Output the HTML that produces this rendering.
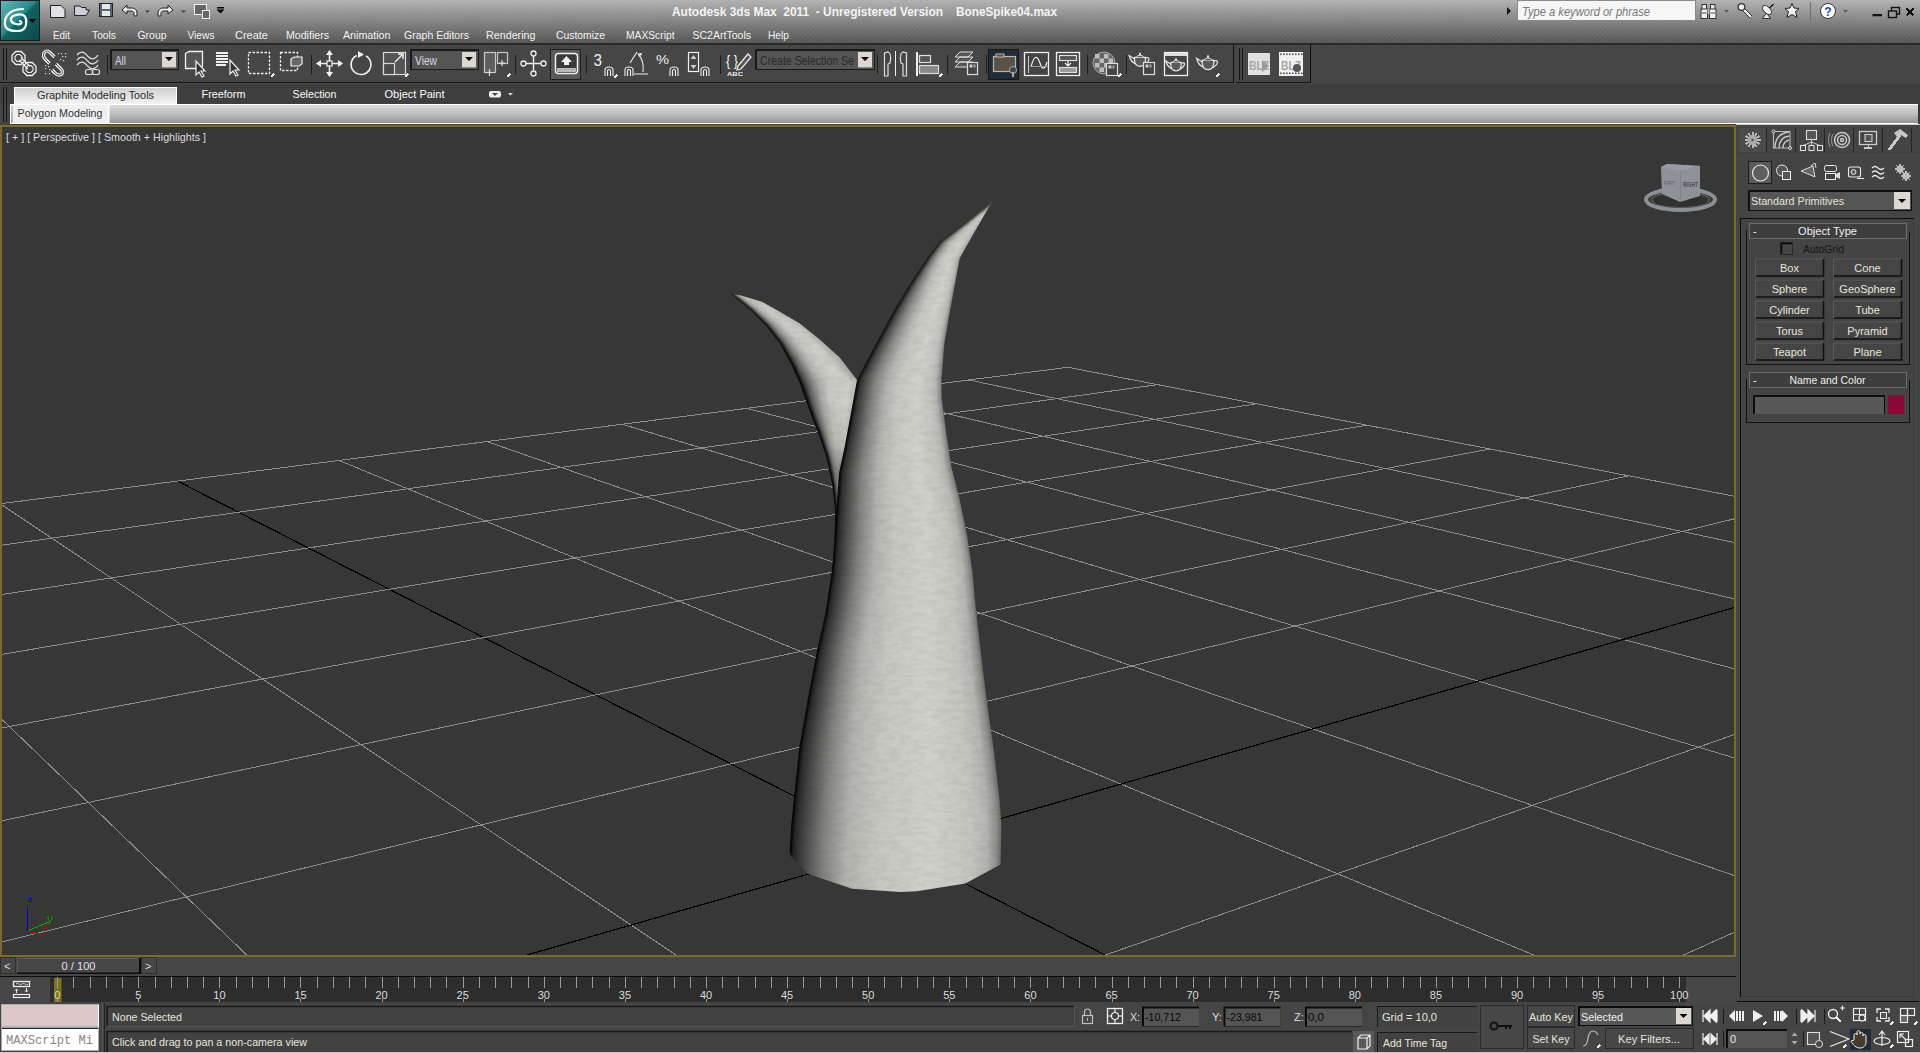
<!DOCTYPE html>
<html><head><meta charset="utf-8">
<style>
*{margin:0;padding:0;box-sizing:border-box}
html,body{width:1920px;height:1053px;overflow:hidden;background:#444;font-family:"Liberation Sans",sans-serif;font-size:11px;color:#ddd}
.a{position:absolute}
#title{left:0;top:0;width:1920px;height:43px;background:repeating-linear-gradient(135deg,rgba(255,255,255,0) 0px,rgba(255,255,255,0) 2px,rgba(255,255,255,0.05) 2.5px,rgba(255,255,255,0) 3.5px),linear-gradient(#b2b2b2 0%,#9a9a9a 25%,#838383 50%,#6c6c6c 75%,#565656 100%)}
#titleline{left:0;top:43px;width:1920px;height:2px;background:#2a2a2a}
#tb{left:0;top:45px;width:1920px;height:39px;background:#464646}
#tbline{left:0;top:83px;width:1920px;height:1px;background:#222}
#rtabs{left:0;top:84px;width:1920px;height:20px;background:#3f3f3f}
#rpanel{left:10px;top:104px;width:1910px;height:20px;background:linear-gradient(#f4f4f4 0%,#d8d8d8 35%,#a8a8a8 100%);border-bottom:1px solid #fff}
#vp{left:0;top:125px;width:1736px;height:832px;border:2px solid #7d6a2b;background:#373737}
#cmd{left:1740px;top:125px;width:180px;height:871px;background:#444}
.menu{top:28px;color:#f0f0f0;font-size:11.5px}
</style></head><body>
<div class="a" id="title"></div>
<div class="a" id="titleline"></div>
<div class="a" id="tb"></div>

<div class="a" id="rtabs"></div>
<div class="a" id="rpanel"></div>
<div class="a" id="vp"></div>
<svg class="a" style="left:0;top:0" width="1920" height="1053">
<defs>
<clipPath id="vpc"><rect x="2" y="127" width="1732" height="828"/></clipPath>
</defs>
<style>line{shape-rendering:crispEdges}.g{stroke:#8c8c8c;stroke-width:1}.ax{stroke:#000;stroke-width:1.2}</style>
<g clip-path="url(#vpc)">
<line class="g" x1="2.0" y1="719.4" x2="246.7" y2="955.0"/>
<line class="g" x1="2.0" y1="505.0" x2="675.9" y2="955.0"/>
<line class="ax" x1="177.6" y1="481.1" x2="1105.0" y2="955.0"/>
<line class="g" x1="339.1" y1="460.4" x2="1533.8" y2="955.0"/>
<line class="g" x1="486.7" y1="441.5" x2="1734.0" y2="875.5"/>
<line class="g" x1="622.2" y1="424.2" x2="1734.0" y2="757.8"/>
<line class="g" x1="746.9" y1="408.3" x2="1734.0" y2="668.7"/>
<line class="g" x1="862.1" y1="393.6" x2="1734.0" y2="598.8"/>
<line class="g" x1="968.8" y1="379.9" x2="1734.0" y2="542.5"/>
<line class="g" x1="1068.0" y1="367.3" x2="1734.0" y2="496.2"/>
<line class="g" x1="2.0" y1="503.5" x2="1068.0" y2="367.3"/>
<line class="g" x1="2.0" y1="545.1" x2="1157.6" y2="384.6"/>
<line class="g" x1="2.0" y1="594.5" x2="1256.8" y2="403.8"/>
<line class="g" x1="2.0" y1="654.3" x2="1367.0" y2="425.1"/>
<line class="g" x1="2.0" y1="727.9" x2="1490.1" y2="449.0"/>
<line class="g" x1="2.0" y1="820.8" x2="1628.7" y2="475.8"/>
<line class="g" x1="2.0" y1="941.9" x2="1734.0" y2="518.9"/>
<line class="ax" x1="527.0" y1="955.0" x2="1734.0" y2="607.6"/>
<line class="g" x1="1105.5" y1="955.0" x2="1734.0" y2="734.7"/>
<line class="g" x1="1683.6" y1="955.0" x2="1734.0" y2="932.4"/>
</g>

<defs>
<filter id="bl2" x="-50%" y="-50%" width="200%" height="200%"><feGaussianBlur stdDeviation="1.5"/></filter>
<filter id="bl4" x="-50%" y="-50%" width="200%" height="200%"><feGaussianBlur stdDeviation="4"/></filter>
<filter id="tex" x="0" y="0" width="100%" height="100%"><feTurbulence type="fractalNoise" baseFrequency="0.08 0.22" numOctaves="3" seed="11"/><feColorMatrix type="matrix" values="0 0 0 0 0.82  0 0 0 0 0.81  0 0 0 0 0.72  0 0 0 -3.5 2.1"/></filter>
<linearGradient id="secdark" x1="0" y1="0" x2="0" y2="1"><stop offset="0" stop-color="#000" stop-opacity="0"/><stop offset="0.3" stop-color="#000" stop-opacity="0.08"/><stop offset="0.5" stop-color="#000" stop-opacity="0.35"/><stop offset="1" stop-color="#000" stop-opacity="0.6"/></linearGradient>
<filter id="vbl" x="-10%" y="-10%" width="120%" height="120%"><feGaussianBlur stdDeviation="0.3 3"/></filter>
<linearGradient id="mg" x1="0" y1="0" x2="1" y2="0">
<stop offset="0" stop-color="#0a0a0a"/><stop offset="0.04" stop-color="#3a3a3a"/><stop offset="0.14" stop-color="#7c7c7b"/><stop offset="0.30" stop-color="#b4b4b1"/><stop offset="0.48" stop-color="#cbcbc7"/><stop offset="0.66" stop-color="#d2d2ce"/><stop offset="0.85" stop-color="#c6c6c2"/><stop offset="0.95" stop-color="#b0b0ad"/><stop offset="1" stop-color="#8e8e8c"/>
</linearGradient>
<linearGradient id="sg" x1="0" y1="0" x2="1" y2="0">
<stop offset="0" stop-color="#050505"/><stop offset="0.06" stop-color="#303030"/><stop offset="0.16" stop-color="#6a6a69"/><stop offset="0.30" stop-color="#a8a8a5"/><stop offset="0.45" stop-color="#c6c6c2"/><stop offset="0.75" stop-color="#d0d0cc"/><stop offset="0.9" stop-color="#b8b8b5"/><stop offset="1" stop-color="#8c8c8a"/>
</linearGradient>

<clipPath id="mainc"><polygon points="992.2,201.4 975.2,230.8 959.8,258.0 954.7,285.5 949.6,312.8 944.4,343.6 941.7,377.8 941.7,398.3 946.2,432.5 951.3,466.7 959.8,500.0 967.1,536.1 972.5,572.2 976.1,611.9 981.5,658.8 986.9,702.1 994.1,752.6 999.5,799.5 1001.3,824.8 1000.6,864.5 965.3,883.5 917.1,891.3 900.2,892.0 852.0,888.7 807.8,873.8 791.5,856.8 789.5,852.9 791.3,824.2 794.5,791.9 799.4,746.6 807.4,701.4 817.1,649.8 825.2,614.3 831.7,572.3 834.5,540.0 837.0,501.6 839.0,473.0 844.7,446.5 850.4,416.0 857.0,380.0 867.6,359.5 878.0,340.0 895.5,307.7 911.5,281.7 927.4,257.8 939.4,241.9 959.3,226.9"/></clipPath>
<clipPath id="secc"><polygon points="730.0,293.3 741.9,295.7 761.9,301.7 779.8,311.7 799.8,323.6 819.7,339.6 839.7,357.5 857.0,380.0 870.0,420.0 850.0,560.0 834.5,540.0 835.2,511.0 832.3,484.5 826.6,458.0 819.0,435.0 811.4,416.0 800.0,383.7 791.8,365.5 779.8,343.6 765.9,325.6 749.9,309.7"/></clipPath>
</defs>
<g clip-path="url(#secc)"><rect x="720" y="285" width="150" height="260" fill="#c4c4c0"/><g filter="url(#vbl)">
<rect x="729.5" y="292" width="6.5" height="2.4" fill="url(#sg)"/>
<rect x="730.3" y="294" width="14.4" height="2.4" fill="url(#sg)"/>
<rect x="732.8" y="296" width="18.6" height="2.4" fill="url(#sg)"/>
<rect x="735.2" y="298" width="22.9" height="2.4" fill="url(#sg)"/>
<rect x="737.6" y="300" width="26.0" height="2.4" fill="url(#sg)"/>
<rect x="740.1" y="302" width="27.2" height="2.4" fill="url(#sg)"/>
<rect x="742.5" y="304" width="28.3" height="2.4" fill="url(#sg)"/>
<rect x="744.9" y="306" width="29.5" height="2.4" fill="url(#sg)"/>
<rect x="747.3" y="308" width="30.6" height="2.4" fill="url(#sg)"/>
<rect x="749.7" y="310" width="31.8" height="2.4" fill="url(#sg)"/>
<rect x="751.7" y="312" width="33.1" height="2.4" fill="url(#sg)"/>
<rect x="753.7" y="314" width="34.5" height="2.4" fill="url(#sg)"/>
<rect x="755.7" y="316" width="35.8" height="2.4" fill="url(#sg)"/>
<rect x="757.8" y="318" width="37.2" height="2.4" fill="url(#sg)"/>
<rect x="759.8" y="320" width="38.5" height="2.4" fill="url(#sg)"/>
<rect x="761.8" y="322" width="39.5" height="2.4" fill="url(#sg)"/>
<rect x="763.8" y="324" width="40.0" height="2.4" fill="url(#sg)"/>
<rect x="765.7" y="326" width="40.6" height="2.4" fill="url(#sg)"/>
<rect x="767.3" y="328" width="41.5" height="2.4" fill="url(#sg)"/>
<rect x="768.8" y="330" width="42.4" height="2.4" fill="url(#sg)"/>
<rect x="770.3" y="332" width="43.4" height="2.4" fill="url(#sg)"/>
<rect x="771.9" y="334" width="44.3" height="2.4" fill="url(#sg)"/>
<rect x="773.4" y="336" width="45.3" height="2.4" fill="url(#sg)"/>
<rect x="775.0" y="338" width="46.1" height="2.4" fill="url(#sg)"/>
<rect x="776.5" y="340" width="46.8" height="2.4" fill="url(#sg)"/>
<rect x="778.1" y="342" width="47.5" height="2.4" fill="url(#sg)"/>
<rect x="779.5" y="344" width="48.3" height="2.4" fill="url(#sg)"/>
<rect x="780.6" y="346" width="49.4" height="2.4" fill="url(#sg)"/>
<rect x="781.7" y="348" width="50.6" height="2.4" fill="url(#sg)"/>
<rect x="782.8" y="350" width="51.7" height="2.4" fill="url(#sg)"/>
<rect x="783.9" y="352" width="52.8" height="2.4" fill="url(#sg)"/>
<rect x="785.0" y="354" width="54.0" height="2.4" fill="url(#sg)"/>
<rect x="786.1" y="356" width="54.8" height="2.4" fill="url(#sg)"/>
<rect x="787.2" y="358" width="55.2" height="2.4" fill="url(#sg)"/>
<rect x="788.3" y="360" width="55.7" height="2.4" fill="url(#sg)"/>
<rect x="789.4" y="362" width="56.1" height="2.4" fill="url(#sg)"/>
<rect x="790.5" y="364" width="56.6" height="2.4" fill="url(#sg)"/>
<rect x="791.5" y="366" width="57.1" height="2.4" fill="url(#sg)"/>
<rect x="792.4" y="368" width="57.7" height="2.4" fill="url(#sg)"/>
<rect x="793.3" y="370" width="58.3" height="2.4" fill="url(#sg)"/>
<rect x="794.2" y="372" width="59.0" height="2.4" fill="url(#sg)"/>
<rect x="795.1" y="374" width="59.6" height="2.4" fill="url(#sg)"/>
<rect x="796.0" y="376" width="60.2" height="2.4" fill="url(#sg)"/>
<rect x="796.9" y="378" width="66.5" height="2.4" fill="url(#sg)"/>
<rect x="797.8" y="380" width="65.2" height="2.4" fill="url(#sg)"/>
<rect x="798.7" y="382" width="64.4" height="2.4" fill="url(#sg)"/>
<rect x="799.6" y="384" width="63.2" height="2.4" fill="url(#sg)"/>
<rect x="800.3" y="386" width="62.1" height="2.4" fill="url(#sg)"/>
<rect x="801.0" y="388" width="61.0" height="2.4" fill="url(#sg)"/>
<rect x="801.7" y="390" width="59.9" height="2.4" fill="url(#sg)"/>
<rect x="802.4" y="392" width="58.9" height="2.4" fill="url(#sg)"/>
<rect x="803.1" y="394" width="57.8" height="2.4" fill="url(#sg)"/>
<rect x="803.8" y="396" width="56.7" height="2.4" fill="url(#sg)"/>
<rect x="804.5" y="398" width="55.7" height="2.4" fill="url(#sg)"/>
<rect x="805.3" y="400" width="54.6" height="2.4" fill="url(#sg)"/>
<rect x="806.0" y="402" width="53.5" height="2.4" fill="url(#sg)"/>
<rect x="806.7" y="404" width="52.4" height="2.4" fill="url(#sg)"/>
<rect x="807.4" y="406" width="51.4" height="2.4" fill="url(#sg)"/>
<rect x="808.1" y="408" width="50.3" height="2.4" fill="url(#sg)"/>
<rect x="808.8" y="410" width="49.2" height="2.4" fill="url(#sg)"/>
<rect x="809.5" y="412" width="48.1" height="2.4" fill="url(#sg)"/>
<rect x="810.2" y="414" width="47.1" height="2.4" fill="url(#sg)"/>
<rect x="810.9" y="416" width="46.0" height="2.4" fill="url(#sg)"/>
<rect x="811.7" y="418" width="44.8" height="2.4" fill="url(#sg)"/>
<rect x="812.5" y="420" width="43.7" height="2.4" fill="url(#sg)"/>
<rect x="813.3" y="422" width="42.5" height="2.4" fill="url(#sg)"/>
<rect x="814.1" y="424" width="41.3" height="2.4" fill="url(#sg)"/>
<rect x="814.9" y="426" width="40.1" height="2.4" fill="url(#sg)"/>
<rect x="815.7" y="428" width="39.0" height="2.4" fill="url(#sg)"/>
<rect x="816.5" y="430" width="37.8" height="2.4" fill="url(#sg)"/>
<rect x="817.3" y="432" width="36.6" height="2.4" fill="url(#sg)"/>
<rect x="818.1" y="434" width="35.4" height="2.4" fill="url(#sg)"/>
<rect x="818.8" y="436" width="34.3" height="2.4" fill="url(#sg)"/>
<rect x="819.5" y="438" width="33.3" height="2.4" fill="url(#sg)"/>
<rect x="820.2" y="440" width="32.3" height="2.4" fill="url(#sg)"/>
<rect x="820.8" y="442" width="31.2" height="2.4" fill="url(#sg)"/>
<rect x="821.5" y="444" width="30.2" height="2.4" fill="url(#sg)"/>
<rect x="822.1" y="446" width="29.2" height="2.4" fill="url(#sg)"/>
<rect x="822.8" y="448" width="28.1" height="2.4" fill="url(#sg)"/>
<rect x="823.5" y="450" width="27.0" height="2.4" fill="url(#sg)"/>
<rect x="824.1" y="452" width="25.9" height="2.4" fill="url(#sg)"/>
<rect x="824.8" y="454" width="24.8" height="2.4" fill="url(#sg)"/>
<rect x="825.4" y="456" width="23.7" height="2.4" fill="url(#sg)"/>
<rect x="826.1" y="458" width="22.6" height="2.4" fill="url(#sg)"/>
<rect x="826.5" y="460" width="21.8" height="2.4" fill="url(#sg)"/>
<rect x="827.0" y="462" width="20.9" height="2.4" fill="url(#sg)"/>
<rect x="827.4" y="464" width="20.0" height="2.4" fill="url(#sg)"/>
<rect x="827.8" y="466" width="19.2" height="2.4" fill="url(#sg)"/>
<rect x="828.3" y="468" width="18.3" height="2.4" fill="url(#sg)"/>
<rect x="828.7" y="470" width="17.5" height="2.4" fill="url(#sg)"/>
<rect x="829.1" y="472" width="16.6" height="2.4" fill="url(#sg)"/>
<rect x="829.5" y="474" width="15.9" height="2.4" fill="url(#sg)"/>
<rect x="830.0" y="476" width="15.3" height="2.4" fill="url(#sg)"/>
<rect x="830.4" y="478" width="14.7" height="2.4" fill="url(#sg)"/>
<rect x="830.8" y="480" width="14.2" height="2.4" fill="url(#sg)"/>
<rect x="831.3" y="482" width="13.6" height="2.4" fill="url(#sg)"/>
<rect x="831.7" y="484" width="13.0" height="2.4" fill="url(#sg)"/>
<rect x="832.0" y="486" width="12.6" height="2.4" fill="url(#sg)"/>
<rect x="832.2" y="488" width="12.3" height="2.4" fill="url(#sg)"/>
<rect x="832.4" y="490" width="11.9" height="2.4" fill="url(#sg)"/>
<rect x="832.6" y="492" width="11.6" height="2.4" fill="url(#sg)"/>
<rect x="832.8" y="494" width="11.2" height="2.4" fill="url(#sg)"/>
<rect x="833.1" y="496" width="10.8" height="2.4" fill="url(#sg)"/>
<rect x="833.3" y="498" width="10.5" height="2.4" fill="url(#sg)"/>
<rect x="833.5" y="500" width="10.1" height="2.4" fill="url(#sg)"/>
<rect x="833.7" y="502" width="9.8" height="2.4" fill="url(#sg)"/>
<rect x="833.9" y="504" width="9.4" height="2.4" fill="url(#sg)"/>
<rect x="834.2" y="506" width="9.1" height="2.4" fill="url(#sg)"/>
<rect x="834.4" y="508" width="8.7" height="2.4" fill="url(#sg)"/>
<rect x="834.6" y="510" width="8.4" height="2.4" fill="url(#sg)"/>
<rect x="834.6" y="512" width="8.2" height="2.4" fill="url(#sg)"/>
<rect x="834.6" y="514" width="8.1" height="2.4" fill="url(#sg)"/>
<rect x="834.5" y="516" width="8.0" height="2.4" fill="url(#sg)"/>
<rect x="834.5" y="518" width="8.0" height="2.4" fill="url(#sg)"/>
<rect x="834.4" y="520" width="7.9" height="2.4" fill="url(#sg)"/>
<rect x="834.4" y="522" width="7.8" height="2.4" fill="url(#sg)"/>
<rect x="834.3" y="524" width="7.7" height="2.4" fill="url(#sg)"/>
<rect x="834.3" y="526" width="7.6" height="2.4" fill="url(#sg)"/>
<rect x="834.2" y="528" width="7.5" height="2.4" fill="url(#sg)"/>
<rect x="834.2" y="530" width="7.5" height="2.4" fill="url(#sg)"/>
<rect x="834.1" y="532" width="7.4" height="2.4" fill="url(#sg)"/>
<rect x="834.1" y="534" width="7.3" height="2.4" fill="url(#sg)"/>
<rect x="834.0" y="536" width="7.2" height="2.4" fill="url(#sg)"/>
<rect x="834.0" y="538" width="7.1" height="2.4" fill="url(#sg)"/>
<rect x="834.0" y="540" width="7.0" height="2.4" fill="url(#sg)"/>
<rect x="834.0" y="542" width="6.8" height="2.4" fill="url(#sg)"/>
<rect x="834.0" y="544" width="6.7" height="2.4" fill="url(#sg)"/>
</g>
<rect x="780" y="400" width="80" height="145" fill="url(#secdark)"/>
<polyline points="730.0,293.3 749.9,309.7 765.9,325.6 779.8,343.6 791.8,365.5 800.0,383.7 811.4,416.0 819.0,435.0 826.6,458.0 832.3,484.5 835.2,511.0 834.5,540.0" fill="none" stroke="#000" stroke-width="4" filter="url(#bl2)"/>
<rect x="720" y="285" width="150" height="260" filter="url(#tex)" opacity="0.4" style="mix-blend-mode:multiply"/>
</g>
<defs><linearGradient id="mg0" x1="0" y1="0" x2="1" y2="0"><stop offset="0.000" stop-color="#080808"/><stop offset="0.027" stop-color="#262626"/><stop offset="0.102" stop-color="#4e4e4e"/><stop offset="0.204" stop-color="#828281"/><stop offset="0.340" stop-color="#b2b2af"/><stop offset="0.472" stop-color="#c6c6c2"/><stop offset="0.703" stop-color="#d0d0cc"/><stop offset="0.868" stop-color="#c4c4c0"/><stop offset="0.930" stop-color="#b4b4b1"/><stop offset="0.975" stop-color="#8e8e8c"/><stop offset="1.000" stop-color="#666666"/></linearGradient><linearGradient id="mg1" x1="0" y1="0" x2="1" y2="0"><stop offset="0.000" stop-color="#080808"/><stop offset="0.027" stop-color="#262626"/><stop offset="0.103" stop-color="#4e4e4e"/><stop offset="0.206" stop-color="#828281"/><stop offset="0.343" stop-color="#b2b2af"/><stop offset="0.474" stop-color="#c6c6c2"/><stop offset="0.704" stop-color="#d0d0cc"/><stop offset="0.869" stop-color="#c4c4c0"/><stop offset="0.930" stop-color="#b4b4b1"/><stop offset="0.975" stop-color="#8e8e8c"/><stop offset="1.000" stop-color="#666666"/></linearGradient><linearGradient id="mg2" x1="0" y1="0" x2="1" y2="0"><stop offset="0.000" stop-color="#080808"/><stop offset="0.028" stop-color="#262626"/><stop offset="0.105" stop-color="#4e4e4e"/><stop offset="0.209" stop-color="#828281"/><stop offset="0.349" stop-color="#b2b2af"/><stop offset="0.479" stop-color="#c6c6c2"/><stop offset="0.707" stop-color="#d0d0cc"/><stop offset="0.870" stop-color="#c4c4c0"/><stop offset="0.930" stop-color="#b4b4b1"/><stop offset="0.975" stop-color="#8e8e8c"/><stop offset="1.000" stop-color="#666666"/></linearGradient><linearGradient id="mg3" x1="0" y1="0" x2="1" y2="0"><stop offset="0.000" stop-color="#080808"/><stop offset="0.028" stop-color="#262626"/><stop offset="0.107" stop-color="#4e4e4e"/><stop offset="0.213" stop-color="#828281"/><stop offset="0.355" stop-color="#b2b2af"/><stop offset="0.484" stop-color="#c6c6c2"/><stop offset="0.710" stop-color="#d0d0cc"/><stop offset="0.871" stop-color="#c4c4c0"/><stop offset="0.930" stop-color="#b4b4b1"/><stop offset="0.975" stop-color="#8e8e8c"/><stop offset="1.000" stop-color="#666666"/></linearGradient><linearGradient id="mg4" x1="0" y1="0" x2="1" y2="0"><stop offset="0.000" stop-color="#080808"/><stop offset="0.029" stop-color="#262626"/><stop offset="0.108" stop-color="#4e4e4e"/><stop offset="0.217" stop-color="#828281"/><stop offset="0.361" stop-color="#b2b2af"/><stop offset="0.489" stop-color="#c6c6c2"/><stop offset="0.712" stop-color="#d0d0cc"/><stop offset="0.872" stop-color="#c4c4c0"/><stop offset="0.930" stop-color="#b4b4b1"/><stop offset="0.975" stop-color="#8e8e8c"/><stop offset="1.000" stop-color="#666666"/></linearGradient><linearGradient id="mg5" x1="0" y1="0" x2="1" y2="0"><stop offset="0.000" stop-color="#080808"/><stop offset="0.029" stop-color="#262626"/><stop offset="0.110" stop-color="#4e4e4e"/><stop offset="0.220" stop-color="#828281"/><stop offset="0.367" stop-color="#b2b2af"/><stop offset="0.494" stop-color="#c6c6c2"/><stop offset="0.715" stop-color="#d0d0cc"/><stop offset="0.873" stop-color="#c4c4c0"/><stop offset="0.930" stop-color="#b4b4b1"/><stop offset="0.975" stop-color="#8e8e8c"/><stop offset="1.000" stop-color="#666666"/></linearGradient><linearGradient id="mg6" x1="0" y1="0" x2="1" y2="0"><stop offset="0.000" stop-color="#080808"/><stop offset="0.030" stop-color="#262626"/><stop offset="0.112" stop-color="#4e4e4e"/><stop offset="0.224" stop-color="#828281"/><stop offset="0.373" stop-color="#b2b2af"/><stop offset="0.498" stop-color="#c6c6c2"/><stop offset="0.718" stop-color="#d0d0cc"/><stop offset="0.875" stop-color="#c4c4c0"/><stop offset="0.930" stop-color="#b4b4b1"/><stop offset="0.975" stop-color="#8e8e8c"/><stop offset="1.000" stop-color="#666666"/></linearGradient><linearGradient id="mg7" x1="0" y1="0" x2="1" y2="0"><stop offset="0.000" stop-color="#080808"/><stop offset="0.030" stop-color="#262626"/><stop offset="0.114" stop-color="#4e4e4e"/><stop offset="0.227" stop-color="#828281"/><stop offset="0.379" stop-color="#b2b2af"/><stop offset="0.503" stop-color="#c6c6c2"/><stop offset="0.721" stop-color="#d0d0cc"/><stop offset="0.876" stop-color="#c4c4c0"/><stop offset="0.930" stop-color="#b4b4b1"/><stop offset="0.975" stop-color="#8e8e8c"/><stop offset="1.000" stop-color="#666666"/></linearGradient><linearGradient id="mg8" x1="0" y1="0" x2="1" y2="0"><stop offset="0.000" stop-color="#080808"/><stop offset="0.031" stop-color="#262626"/><stop offset="0.115" stop-color="#4e4e4e"/><stop offset="0.231" stop-color="#828281"/><stop offset="0.385" stop-color="#b2b2af"/><stop offset="0.508" stop-color="#c6c6c2"/><stop offset="0.723" stop-color="#d0d0cc"/><stop offset="0.877" stop-color="#c4c4c0"/><stop offset="0.930" stop-color="#b4b4b1"/><stop offset="0.975" stop-color="#8e8e8c"/><stop offset="1.000" stop-color="#666666"/></linearGradient><linearGradient id="mg9" x1="0" y1="0" x2="1" y2="0"><stop offset="0.000" stop-color="#080808"/><stop offset="0.031" stop-color="#262626"/><stop offset="0.117" stop-color="#4e4e4e"/><stop offset="0.235" stop-color="#828281"/><stop offset="0.391" stop-color="#b2b2af"/><stop offset="0.513" stop-color="#c6c6c2"/><stop offset="0.726" stop-color="#d0d0cc"/><stop offset="0.878" stop-color="#c4c4c0"/><stop offset="0.930" stop-color="#b4b4b1"/><stop offset="0.975" stop-color="#8e8e8c"/><stop offset="1.000" stop-color="#666666"/></linearGradient><linearGradient id="mg10" x1="0" y1="0" x2="1" y2="0"><stop offset="0.000" stop-color="#080808"/><stop offset="0.032" stop-color="#262626"/><stop offset="0.119" stop-color="#4e4e4e"/><stop offset="0.238" stop-color="#828281"/><stop offset="0.397" stop-color="#b2b2af"/><stop offset="0.518" stop-color="#c6c6c2"/><stop offset="0.729" stop-color="#d0d0cc"/><stop offset="0.879" stop-color="#c4c4c0"/><stop offset="0.930" stop-color="#b4b4b1"/><stop offset="0.975" stop-color="#8e8e8c"/><stop offset="1.000" stop-color="#666666"/></linearGradient><linearGradient id="mg11" x1="0" y1="0" x2="1" y2="0"><stop offset="0.000" stop-color="#080808"/><stop offset="0.032" stop-color="#262626"/><stop offset="0.119" stop-color="#4e4e4e"/><stop offset="0.239" stop-color="#828281"/><stop offset="0.398" stop-color="#b2b2af"/><stop offset="0.518" stop-color="#c6c6c2"/><stop offset="0.729" stop-color="#d0d0cc"/><stop offset="0.880" stop-color="#c4c4c0"/><stop offset="0.930" stop-color="#b4b4b1"/><stop offset="0.975" stop-color="#8e8e8c"/><stop offset="1.000" stop-color="#666666"/></linearGradient><linearGradient id="mg12" x1="0" y1="0" x2="1" y2="0"><stop offset="0.000" stop-color="#080808"/><stop offset="0.032" stop-color="#262626"/><stop offset="0.118" stop-color="#4e4e4e"/><stop offset="0.236" stop-color="#828281"/><stop offset="0.394" stop-color="#b2b2af"/><stop offset="0.515" stop-color="#c6c6c2"/><stop offset="0.727" stop-color="#d0d0cc"/><stop offset="0.879" stop-color="#c4c4c0"/><stop offset="0.930" stop-color="#b4b4b1"/><stop offset="0.975" stop-color="#8e8e8c"/><stop offset="1.000" stop-color="#666666"/></linearGradient><linearGradient id="mg13" x1="0" y1="0" x2="1" y2="0"><stop offset="0.000" stop-color="#080808"/><stop offset="0.031" stop-color="#262626"/><stop offset="0.117" stop-color="#4e4e4e"/><stop offset="0.234" stop-color="#828281"/><stop offset="0.390" stop-color="#b2b2af"/><stop offset="0.512" stop-color="#c6c6c2"/><stop offset="0.726" stop-color="#d0d0cc"/><stop offset="0.878" stop-color="#c4c4c0"/><stop offset="0.930" stop-color="#b4b4b1"/><stop offset="0.975" stop-color="#8e8e8c"/><stop offset="1.000" stop-color="#666666"/></linearGradient><linearGradient id="mg14" x1="0" y1="0" x2="1" y2="0"><stop offset="0.000" stop-color="#080808"/><stop offset="0.031" stop-color="#262626"/><stop offset="0.116" stop-color="#4e4e4e"/><stop offset="0.232" stop-color="#828281"/><stop offset="0.386" stop-color="#b2b2af"/><stop offset="0.509" stop-color="#c6c6c2"/><stop offset="0.724" stop-color="#d0d0cc"/><stop offset="0.877" stop-color="#c4c4c0"/><stop offset="0.930" stop-color="#b4b4b1"/><stop offset="0.975" stop-color="#8e8e8c"/><stop offset="1.000" stop-color="#666666"/></linearGradient><linearGradient id="mg15" x1="0" y1="0" x2="1" y2="0"><stop offset="0.000" stop-color="#080808"/><stop offset="0.031" stop-color="#262626"/><stop offset="0.115" stop-color="#4e4e4e"/><stop offset="0.229" stop-color="#828281"/><stop offset="0.382" stop-color="#b2b2af"/><stop offset="0.506" stop-color="#c6c6c2"/><stop offset="0.722" stop-color="#d0d0cc"/><stop offset="0.876" stop-color="#c4c4c0"/><stop offset="0.930" stop-color="#b4b4b1"/><stop offset="0.975" stop-color="#8e8e8c"/><stop offset="1.000" stop-color="#666666"/></linearGradient><linearGradient id="mg16" x1="0" y1="0" x2="1" y2="0"><stop offset="0.000" stop-color="#080808"/><stop offset="0.030" stop-color="#262626"/><stop offset="0.113" stop-color="#4e4e4e"/><stop offset="0.227" stop-color="#828281"/><stop offset="0.378" stop-color="#b2b2af"/><stop offset="0.502" stop-color="#c6c6c2"/><stop offset="0.720" stop-color="#d0d0cc"/><stop offset="0.876" stop-color="#c4c4c0"/><stop offset="0.930" stop-color="#b4b4b1"/><stop offset="0.975" stop-color="#8e8e8c"/><stop offset="1.000" stop-color="#666666"/></linearGradient><linearGradient id="mg17" x1="0" y1="0" x2="1" y2="0"><stop offset="0.000" stop-color="#080808"/><stop offset="0.030" stop-color="#262626"/><stop offset="0.112" stop-color="#4e4e4e"/><stop offset="0.224" stop-color="#828281"/><stop offset="0.374" stop-color="#b2b2af"/><stop offset="0.499" stop-color="#c6c6c2"/><stop offset="0.718" stop-color="#d0d0cc"/><stop offset="0.875" stop-color="#c4c4c0"/><stop offset="0.930" stop-color="#b4b4b1"/><stop offset="0.975" stop-color="#8e8e8c"/><stop offset="1.000" stop-color="#666666"/></linearGradient><linearGradient id="mg18" x1="0" y1="0" x2="1" y2="0"><stop offset="0.000" stop-color="#080808"/><stop offset="0.030" stop-color="#262626"/><stop offset="0.111" stop-color="#4e4e4e"/><stop offset="0.222" stop-color="#828281"/><stop offset="0.370" stop-color="#b2b2af"/><stop offset="0.496" stop-color="#c6c6c2"/><stop offset="0.717" stop-color="#d0d0cc"/><stop offset="0.874" stop-color="#c4c4c0"/><stop offset="0.930" stop-color="#b4b4b1"/><stop offset="0.975" stop-color="#8e8e8c"/><stop offset="1.000" stop-color="#666666"/></linearGradient><linearGradient id="mg19" x1="0" y1="0" x2="1" y2="0"><stop offset="0.000" stop-color="#080808"/><stop offset="0.029" stop-color="#262626"/><stop offset="0.110" stop-color="#4e4e4e"/><stop offset="0.220" stop-color="#828281"/><stop offset="0.366" stop-color="#b2b2af"/><stop offset="0.493" stop-color="#c6c6c2"/><stop offset="0.715" stop-color="#d0d0cc"/><stop offset="0.873" stop-color="#c4c4c0"/><stop offset="0.930" stop-color="#b4b4b1"/><stop offset="0.975" stop-color="#8e8e8c"/><stop offset="1.000" stop-color="#666666"/></linearGradient><linearGradient id="mg20" x1="0" y1="0" x2="1" y2="0"><stop offset="0.000" stop-color="#080808"/><stop offset="0.029" stop-color="#262626"/><stop offset="0.109" stop-color="#4e4e4e"/><stop offset="0.217" stop-color="#828281"/><stop offset="0.362" stop-color="#b2b2af"/><stop offset="0.490" stop-color="#c6c6c2"/><stop offset="0.713" stop-color="#d0d0cc"/><stop offset="0.872" stop-color="#c4c4c0"/><stop offset="0.930" stop-color="#b4b4b1"/><stop offset="0.975" stop-color="#8e8e8c"/><stop offset="1.000" stop-color="#666666"/></linearGradient><linearGradient id="mg21" x1="0" y1="0" x2="1" y2="0"><stop offset="0.000" stop-color="#080808"/><stop offset="0.029" stop-color="#262626"/><stop offset="0.107" stop-color="#4e4e4e"/><stop offset="0.215" stop-color="#828281"/><stop offset="0.358" stop-color="#b2b2af"/><stop offset="0.486" stop-color="#c6c6c2"/><stop offset="0.711" stop-color="#d0d0cc"/><stop offset="0.872" stop-color="#c4c4c0"/><stop offset="0.930" stop-color="#b4b4b1"/><stop offset="0.975" stop-color="#8e8e8c"/><stop offset="1.000" stop-color="#666666"/></linearGradient><linearGradient id="mg22" x1="0" y1="0" x2="1" y2="0"><stop offset="0.000" stop-color="#080808"/><stop offset="0.028" stop-color="#262626"/><stop offset="0.106" stop-color="#4e4e4e"/><stop offset="0.212" stop-color="#828281"/><stop offset="0.354" stop-color="#b2b2af"/><stop offset="0.483" stop-color="#c6c6c2"/><stop offset="0.709" stop-color="#d0d0cc"/><stop offset="0.871" stop-color="#c4c4c0"/><stop offset="0.930" stop-color="#b4b4b1"/><stop offset="0.975" stop-color="#8e8e8c"/><stop offset="1.000" stop-color="#666666"/></linearGradient><linearGradient id="mg23" x1="0" y1="0" x2="1" y2="0"><stop offset="0.000" stop-color="#080808"/><stop offset="0.028" stop-color="#262626"/><stop offset="0.105" stop-color="#4e4e4e"/><stop offset="0.210" stop-color="#828281"/><stop offset="0.350" stop-color="#b2b2af"/><stop offset="0.480" stop-color="#c6c6c2"/><stop offset="0.708" stop-color="#d0d0cc"/><stop offset="0.870" stop-color="#c4c4c0"/><stop offset="0.930" stop-color="#b4b4b1"/><stop offset="0.975" stop-color="#8e8e8c"/><stop offset="1.000" stop-color="#666666"/></linearGradient><linearGradient id="mg24" x1="0" y1="0" x2="1" y2="0"><stop offset="0.000" stop-color="#080808"/><stop offset="0.028" stop-color="#262626"/><stop offset="0.104" stop-color="#4e4e4e"/><stop offset="0.208" stop-color="#828281"/><stop offset="0.346" stop-color="#b2b2af"/><stop offset="0.477" stop-color="#c6c6c2"/><stop offset="0.706" stop-color="#d0d0cc"/><stop offset="0.869" stop-color="#c4c4c0"/><stop offset="0.930" stop-color="#b4b4b1"/><stop offset="0.975" stop-color="#8e8e8c"/><stop offset="1.000" stop-color="#666666"/></linearGradient><linearGradient id="mg25" x1="0" y1="0" x2="1" y2="0"><stop offset="0.000" stop-color="#080808"/><stop offset="0.027" stop-color="#262626"/><stop offset="0.103" stop-color="#4e4e4e"/><stop offset="0.205" stop-color="#828281"/><stop offset="0.342" stop-color="#b2b2af"/><stop offset="0.474" stop-color="#c6c6c2"/><stop offset="0.704" stop-color="#d0d0cc"/><stop offset="0.868" stop-color="#c4c4c0"/><stop offset="0.930" stop-color="#b4b4b1"/><stop offset="0.975" stop-color="#8e8e8c"/><stop offset="1.000" stop-color="#666666"/></linearGradient><linearGradient id="mg26" x1="0" y1="0" x2="1" y2="0"><stop offset="0.000" stop-color="#080808"/><stop offset="0.027" stop-color="#262626"/><stop offset="0.102" stop-color="#4e4e4e"/><stop offset="0.203" stop-color="#828281"/><stop offset="0.339" stop-color="#b2b2af"/><stop offset="0.471" stop-color="#c6c6c2"/><stop offset="0.702" stop-color="#d0d0cc"/><stop offset="0.868" stop-color="#c4c4c0"/><stop offset="0.930" stop-color="#b4b4b1"/><stop offset="0.975" stop-color="#8e8e8c"/><stop offset="1.000" stop-color="#666666"/></linearGradient><linearGradient id="mg27" x1="0" y1="0" x2="1" y2="0"><stop offset="0.000" stop-color="#080808"/><stop offset="0.027" stop-color="#262626"/><stop offset="0.101" stop-color="#4e4e4e"/><stop offset="0.201" stop-color="#828281"/><stop offset="0.336" stop-color="#b2b2af"/><stop offset="0.468" stop-color="#c6c6c2"/><stop offset="0.701" stop-color="#d0d0cc"/><stop offset="0.867" stop-color="#c4c4c0"/><stop offset="0.930" stop-color="#b4b4b1"/><stop offset="0.975" stop-color="#8e8e8c"/><stop offset="1.000" stop-color="#666666"/></linearGradient><linearGradient id="mg28" x1="0" y1="0" x2="1" y2="0"><stop offset="0.000" stop-color="#080808"/><stop offset="0.027" stop-color="#262626"/><stop offset="0.100" stop-color="#4e4e4e"/><stop offset="0.200" stop-color="#828281"/><stop offset="0.333" stop-color="#b2b2af"/><stop offset="0.466" stop-color="#c6c6c2"/><stop offset="0.700" stop-color="#d0d0cc"/><stop offset="0.867" stop-color="#c4c4c0"/><stop offset="0.930" stop-color="#b4b4b1"/><stop offset="0.975" stop-color="#8e8e8c"/><stop offset="1.000" stop-color="#666666"/></linearGradient><linearGradient id="mg29" x1="0" y1="0" x2="1" y2="0"><stop offset="0.000" stop-color="#080808"/><stop offset="0.026" stop-color="#262626"/><stop offset="0.099" stop-color="#4e4e4e"/><stop offset="0.198" stop-color="#828281"/><stop offset="0.330" stop-color="#b2b2af"/><stop offset="0.464" stop-color="#c6c6c2"/><stop offset="0.698" stop-color="#d0d0cc"/><stop offset="0.866" stop-color="#c4c4c0"/><stop offset="0.930" stop-color="#b4b4b1"/><stop offset="0.975" stop-color="#8e8e8c"/><stop offset="1.000" stop-color="#666666"/></linearGradient><linearGradient id="mg30" x1="0" y1="0" x2="1" y2="0"><stop offset="0.000" stop-color="#080808"/><stop offset="0.026" stop-color="#262626"/><stop offset="0.098" stop-color="#4e4e4e"/><stop offset="0.196" stop-color="#828281"/><stop offset="0.327" stop-color="#b2b2af"/><stop offset="0.461" stop-color="#c6c6c2"/><stop offset="0.697" stop-color="#d0d0cc"/><stop offset="0.865" stop-color="#c4c4c0"/><stop offset="0.930" stop-color="#b4b4b1"/><stop offset="0.975" stop-color="#8e8e8c"/><stop offset="1.000" stop-color="#666666"/></linearGradient><linearGradient id="mg31" x1="0" y1="0" x2="1" y2="0"><stop offset="0.000" stop-color="#080808"/><stop offset="0.026" stop-color="#262626"/><stop offset="0.097" stop-color="#4e4e4e"/><stop offset="0.194" stop-color="#828281"/><stop offset="0.324" stop-color="#b2b2af"/><stop offset="0.459" stop-color="#c6c6c2"/><stop offset="0.696" stop-color="#d0d0cc"/><stop offset="0.865" stop-color="#c4c4c0"/><stop offset="0.930" stop-color="#b4b4b1"/><stop offset="0.975" stop-color="#8e8e8c"/><stop offset="1.000" stop-color="#666666"/></linearGradient><linearGradient id="mg32" x1="0" y1="0" x2="1" y2="0"><stop offset="0.000" stop-color="#080808"/><stop offset="0.026" stop-color="#262626"/><stop offset="0.096" stop-color="#4e4e4e"/><stop offset="0.192" stop-color="#828281"/><stop offset="0.321" stop-color="#b2b2af"/><stop offset="0.456" stop-color="#c6c6c2"/><stop offset="0.694" stop-color="#d0d0cc"/><stop offset="0.864" stop-color="#c4c4c0"/><stop offset="0.930" stop-color="#b4b4b1"/><stop offset="0.975" stop-color="#8e8e8c"/><stop offset="1.000" stop-color="#666666"/></linearGradient><linearGradient id="mg33" x1="0" y1="0" x2="1" y2="0"><stop offset="0.000" stop-color="#080808"/><stop offset="0.025" stop-color="#262626"/><stop offset="0.095" stop-color="#4e4e4e"/><stop offset="0.191" stop-color="#828281"/><stop offset="0.318" stop-color="#b2b2af"/><stop offset="0.454" stop-color="#c6c6c2"/><stop offset="0.693" stop-color="#d0d0cc"/><stop offset="0.864" stop-color="#c4c4c0"/><stop offset="0.930" stop-color="#b4b4b1"/><stop offset="0.975" stop-color="#8e8e8c"/><stop offset="1.000" stop-color="#666666"/></linearGradient><linearGradient id="mg34" x1="0" y1="0" x2="1" y2="0"><stop offset="0.000" stop-color="#080808"/><stop offset="0.025" stop-color="#262626"/><stop offset="0.094" stop-color="#4e4e4e"/><stop offset="0.189" stop-color="#828281"/><stop offset="0.315" stop-color="#b2b2af"/><stop offset="0.452" stop-color="#c6c6c2"/><stop offset="0.692" stop-color="#d0d0cc"/><stop offset="0.863" stop-color="#c4c4c0"/><stop offset="0.930" stop-color="#b4b4b1"/><stop offset="0.975" stop-color="#8e8e8c"/><stop offset="1.000" stop-color="#666666"/></linearGradient><linearGradient id="mg35" x1="0" y1="0" x2="1" y2="0"><stop offset="0.000" stop-color="#080808"/><stop offset="0.025" stop-color="#262626"/><stop offset="0.093" stop-color="#4e4e4e"/><stop offset="0.187" stop-color="#828281"/><stop offset="0.311" stop-color="#b2b2af"/><stop offset="0.449" stop-color="#c6c6c2"/><stop offset="0.690" stop-color="#d0d0cc"/><stop offset="0.862" stop-color="#c4c4c0"/><stop offset="0.930" stop-color="#b4b4b1"/><stop offset="0.975" stop-color="#8e8e8c"/><stop offset="1.000" stop-color="#666666"/></linearGradient><linearGradient id="mg36" x1="0" y1="0" x2="1" y2="0"><stop offset="0.000" stop-color="#080808"/><stop offset="0.025" stop-color="#262626"/><stop offset="0.093" stop-color="#4e4e4e"/><stop offset="0.185" stop-color="#828281"/><stop offset="0.308" stop-color="#b2b2af"/><stop offset="0.447" stop-color="#c6c6c2"/><stop offset="0.689" stop-color="#d0d0cc"/><stop offset="0.862" stop-color="#c4c4c0"/><stop offset="0.930" stop-color="#b4b4b1"/><stop offset="0.975" stop-color="#8e8e8c"/><stop offset="1.000" stop-color="#666666"/></linearGradient><linearGradient id="mg37" x1="0" y1="0" x2="1" y2="0"><stop offset="0.000" stop-color="#080808"/><stop offset="0.024" stop-color="#262626"/><stop offset="0.092" stop-color="#4e4e4e"/><stop offset="0.183" stop-color="#828281"/><stop offset="0.306" stop-color="#b2b2af"/><stop offset="0.444" stop-color="#c6c6c2"/><stop offset="0.687" stop-color="#d0d0cc"/><stop offset="0.861" stop-color="#c4c4c0"/><stop offset="0.930" stop-color="#b4b4b1"/><stop offset="0.975" stop-color="#8e8e8c"/><stop offset="1.000" stop-color="#666666"/></linearGradient><linearGradient id="mg38" x1="0" y1="0" x2="1" y2="0"><stop offset="0.000" stop-color="#080808"/><stop offset="0.024" stop-color="#262626"/><stop offset="0.091" stop-color="#4e4e4e"/><stop offset="0.182" stop-color="#828281"/><stop offset="0.303" stop-color="#b2b2af"/><stop offset="0.442" stop-color="#c6c6c2"/><stop offset="0.686" stop-color="#d0d0cc"/><stop offset="0.861" stop-color="#c4c4c0"/><stop offset="0.930" stop-color="#b4b4b1"/><stop offset="0.975" stop-color="#8e8e8c"/><stop offset="1.000" stop-color="#666666"/></linearGradient><linearGradient id="mg39" x1="0" y1="0" x2="1" y2="0"><stop offset="0.000" stop-color="#080808"/><stop offset="0.024" stop-color="#262626"/><stop offset="0.090" stop-color="#4e4e4e"/><stop offset="0.180" stop-color="#828281"/><stop offset="0.300" stop-color="#b2b2af"/><stop offset="0.440" stop-color="#c6c6c2"/><stop offset="0.685" stop-color="#d0d0cc"/><stop offset="0.860" stop-color="#c4c4c0"/><stop offset="0.930" stop-color="#b4b4b1"/><stop offset="0.975" stop-color="#8e8e8c"/><stop offset="1.000" stop-color="#666666"/></linearGradient><linearGradient id="mg40" x1="0" y1="0" x2="1" y2="0"><stop offset="0.000" stop-color="#080808"/><stop offset="0.024" stop-color="#262626"/><stop offset="0.089" stop-color="#4e4e4e"/><stop offset="0.178" stop-color="#828281"/><stop offset="0.297" stop-color="#b2b2af"/><stop offset="0.437" stop-color="#c6c6c2"/><stop offset="0.683" stop-color="#d0d0cc"/><stop offset="0.859" stop-color="#c4c4c0"/><stop offset="0.930" stop-color="#b4b4b1"/><stop offset="0.975" stop-color="#8e8e8c"/><stop offset="1.000" stop-color="#666666"/></linearGradient><linearGradient id="mg41" x1="0" y1="0" x2="1" y2="0"><stop offset="0.000" stop-color="#080808"/><stop offset="0.023" stop-color="#262626"/><stop offset="0.088" stop-color="#4e4e4e"/><stop offset="0.176" stop-color="#828281"/><stop offset="0.294" stop-color="#b2b2af"/><stop offset="0.435" stop-color="#c6c6c2"/><stop offset="0.682" stop-color="#d0d0cc"/><stop offset="0.859" stop-color="#c4c4c0"/><stop offset="0.930" stop-color="#b4b4b1"/><stop offset="0.975" stop-color="#8e8e8c"/><stop offset="1.000" stop-color="#666666"/></linearGradient><linearGradient id="mg42" x1="0" y1="0" x2="1" y2="0"><stop offset="0.000" stop-color="#080808"/><stop offset="0.023" stop-color="#262626"/><stop offset="0.087" stop-color="#4e4e4e"/><stop offset="0.174" stop-color="#828281"/><stop offset="0.291" stop-color="#b2b2af"/><stop offset="0.432" stop-color="#c6c6c2"/><stop offset="0.681" stop-color="#d0d0cc"/><stop offset="0.858" stop-color="#c4c4c0"/><stop offset="0.930" stop-color="#b4b4b1"/><stop offset="0.975" stop-color="#8e8e8c"/><stop offset="1.000" stop-color="#666666"/></linearGradient><linearGradient id="mg43" x1="0" y1="0" x2="1" y2="0"><stop offset="0.000" stop-color="#080808"/><stop offset="0.023" stop-color="#262626"/><stop offset="0.086" stop-color="#4e4e4e"/><stop offset="0.173" stop-color="#828281"/><stop offset="0.288" stop-color="#b2b2af"/><stop offset="0.430" stop-color="#c6c6c2"/><stop offset="0.679" stop-color="#d0d0cc"/><stop offset="0.857" stop-color="#c4c4c0"/><stop offset="0.930" stop-color="#b4b4b1"/><stop offset="0.975" stop-color="#8e8e8c"/><stop offset="1.000" stop-color="#666666"/></linearGradient><linearGradient id="mg44" x1="0" y1="0" x2="1" y2="0"><stop offset="0.000" stop-color="#080808"/><stop offset="0.023" stop-color="#262626"/><stop offset="0.085" stop-color="#4e4e4e"/><stop offset="0.171" stop-color="#828281"/><stop offset="0.285" stop-color="#b2b2af"/><stop offset="0.428" stop-color="#c6c6c2"/><stop offset="0.678" stop-color="#d0d0cc"/><stop offset="0.857" stop-color="#c4c4c0"/><stop offset="0.930" stop-color="#b4b4b1"/><stop offset="0.975" stop-color="#8e8e8c"/><stop offset="1.000" stop-color="#666666"/></linearGradient><linearGradient id="mg45" x1="0" y1="0" x2="1" y2="0"><stop offset="0.000" stop-color="#080808"/><stop offset="0.023" stop-color="#262626"/><stop offset="0.084" stop-color="#4e4e4e"/><stop offset="0.169" stop-color="#828281"/><stop offset="0.282" stop-color="#b2b2af"/><stop offset="0.425" stop-color="#c6c6c2"/><stop offset="0.677" stop-color="#d0d0cc"/><stop offset="0.856" stop-color="#c4c4c0"/><stop offset="0.930" stop-color="#b4b4b1"/><stop offset="0.975" stop-color="#8e8e8c"/><stop offset="1.000" stop-color="#666666"/></linearGradient><linearGradient id="mg46" x1="0" y1="0" x2="1" y2="0"><stop offset="0.000" stop-color="#080808"/><stop offset="0.022" stop-color="#262626"/><stop offset="0.084" stop-color="#4e4e4e"/><stop offset="0.168" stop-color="#828281"/><stop offset="0.280" stop-color="#b2b2af"/><stop offset="0.424" stop-color="#c6c6c2"/><stop offset="0.676" stop-color="#d0d0cc"/><stop offset="0.856" stop-color="#c4c4c0"/><stop offset="0.930" stop-color="#b4b4b1"/><stop offset="0.975" stop-color="#8e8e8c"/><stop offset="1.000" stop-color="#666666"/></linearGradient><linearGradient id="mg47" x1="0" y1="0" x2="1" y2="0"><stop offset="0.000" stop-color="#080808"/><stop offset="0.022" stop-color="#262626"/><stop offset="0.084" stop-color="#4e4e4e"/><stop offset="0.168" stop-color="#828281"/><stop offset="0.279" stop-color="#b2b2af"/><stop offset="0.423" stop-color="#c6c6c2"/><stop offset="0.676" stop-color="#d0d0cc"/><stop offset="0.856" stop-color="#c4c4c0"/><stop offset="0.930" stop-color="#b4b4b1"/><stop offset="0.975" stop-color="#8e8e8c"/><stop offset="1.000" stop-color="#666666"/></linearGradient><linearGradient id="mg48" x1="0" y1="0" x2="1" y2="0"><stop offset="0.000" stop-color="#080808"/><stop offset="0.022" stop-color="#262626"/><stop offset="0.084" stop-color="#4e4e4e"/><stop offset="0.167" stop-color="#828281"/><stop offset="0.279" stop-color="#b2b2af"/><stop offset="0.423" stop-color="#c6c6c2"/><stop offset="0.675" stop-color="#d0d0cc"/><stop offset="0.856" stop-color="#c4c4c0"/><stop offset="0.930" stop-color="#b4b4b1"/><stop offset="0.975" stop-color="#8e8e8c"/><stop offset="1.000" stop-color="#666666"/></linearGradient><linearGradient id="mg49" x1="0" y1="0" x2="1" y2="0"><stop offset="0.000" stop-color="#080808"/><stop offset="0.022" stop-color="#262626"/><stop offset="0.083" stop-color="#4e4e4e"/><stop offset="0.167" stop-color="#828281"/><stop offset="0.278" stop-color="#b2b2af"/><stop offset="0.423" stop-color="#c6c6c2"/><stop offset="0.675" stop-color="#d0d0cc"/><stop offset="0.856" stop-color="#c4c4c0"/><stop offset="0.930" stop-color="#b4b4b1"/><stop offset="0.975" stop-color="#8e8e8c"/><stop offset="1.000" stop-color="#666666"/></linearGradient><linearGradient id="mg50" x1="0" y1="0" x2="1" y2="0"><stop offset="0.000" stop-color="#080808"/><stop offset="0.022" stop-color="#262626"/><stop offset="0.083" stop-color="#4e4e4e"/><stop offset="0.167" stop-color="#828281"/><stop offset="0.278" stop-color="#b2b2af"/><stop offset="0.422" stop-color="#c6c6c2"/><stop offset="0.675" stop-color="#d0d0cc"/><stop offset="0.856" stop-color="#c4c4c0"/><stop offset="0.930" stop-color="#b4b4b1"/><stop offset="0.975" stop-color="#8e8e8c"/><stop offset="1.000" stop-color="#666666"/></linearGradient><linearGradient id="mg51" x1="0" y1="0" x2="1" y2="0"><stop offset="0.000" stop-color="#080808"/><stop offset="0.022" stop-color="#262626"/><stop offset="0.083" stop-color="#4e4e4e"/><stop offset="0.166" stop-color="#828281"/><stop offset="0.277" stop-color="#b2b2af"/><stop offset="0.422" stop-color="#c6c6c2"/><stop offset="0.675" stop-color="#d0d0cc"/><stop offset="0.855" stop-color="#c4c4c0"/><stop offset="0.930" stop-color="#b4b4b1"/><stop offset="0.975" stop-color="#8e8e8c"/><stop offset="1.000" stop-color="#666666"/></linearGradient><linearGradient id="mg52" x1="0" y1="0" x2="1" y2="0"><stop offset="0.000" stop-color="#080808"/><stop offset="0.022" stop-color="#262626"/><stop offset="0.083" stop-color="#4e4e4e"/><stop offset="0.166" stop-color="#828281"/><stop offset="0.277" stop-color="#b2b2af"/><stop offset="0.421" stop-color="#c6c6c2"/><stop offset="0.675" stop-color="#d0d0cc"/><stop offset="0.855" stop-color="#c4c4c0"/><stop offset="0.930" stop-color="#b4b4b1"/><stop offset="0.975" stop-color="#8e8e8c"/><stop offset="1.000" stop-color="#666666"/></linearGradient><linearGradient id="mg53" x1="0" y1="0" x2="1" y2="0"><stop offset="0.000" stop-color="#080808"/><stop offset="0.022" stop-color="#262626"/><stop offset="0.083" stop-color="#4e4e4e"/><stop offset="0.166" stop-color="#828281"/><stop offset="0.276" stop-color="#b2b2af"/><stop offset="0.421" stop-color="#c6c6c2"/><stop offset="0.674" stop-color="#d0d0cc"/><stop offset="0.855" stop-color="#c4c4c0"/><stop offset="0.930" stop-color="#b4b4b1"/><stop offset="0.975" stop-color="#8e8e8c"/><stop offset="1.000" stop-color="#666666"/></linearGradient><linearGradient id="mg54" x1="0" y1="0" x2="1" y2="0"><stop offset="0.000" stop-color="#080808"/><stop offset="0.022" stop-color="#262626"/><stop offset="0.083" stop-color="#4e4e4e"/><stop offset="0.165" stop-color="#828281"/><stop offset="0.276" stop-color="#b2b2af"/><stop offset="0.421" stop-color="#c6c6c2"/><stop offset="0.674" stop-color="#d0d0cc"/><stop offset="0.855" stop-color="#c4c4c0"/><stop offset="0.930" stop-color="#b4b4b1"/><stop offset="0.975" stop-color="#8e8e8c"/><stop offset="1.000" stop-color="#666666"/></linearGradient><linearGradient id="mg55" x1="0" y1="0" x2="1" y2="0"><stop offset="0.000" stop-color="#080808"/><stop offset="0.022" stop-color="#262626"/><stop offset="0.083" stop-color="#4e4e4e"/><stop offset="0.165" stop-color="#828281"/><stop offset="0.275" stop-color="#b2b2af"/><stop offset="0.420" stop-color="#c6c6c2"/><stop offset="0.674" stop-color="#d0d0cc"/><stop offset="0.855" stop-color="#c4c4c0"/><stop offset="0.930" stop-color="#b4b4b1"/><stop offset="0.975" stop-color="#8e8e8c"/><stop offset="1.000" stop-color="#666666"/></linearGradient><linearGradient id="mg56" x1="0" y1="0" x2="1" y2="0"><stop offset="0.000" stop-color="#080808"/><stop offset="0.022" stop-color="#262626"/><stop offset="0.082" stop-color="#4e4e4e"/><stop offset="0.165" stop-color="#828281"/><stop offset="0.275" stop-color="#b2b2af"/><stop offset="0.420" stop-color="#c6c6c2"/><stop offset="0.674" stop-color="#d0d0cc"/><stop offset="0.855" stop-color="#c4c4c0"/><stop offset="0.930" stop-color="#b4b4b1"/><stop offset="0.975" stop-color="#8e8e8c"/><stop offset="1.000" stop-color="#666666"/></linearGradient><linearGradient id="mg57" x1="0" y1="0" x2="1" y2="0"><stop offset="0.000" stop-color="#080808"/><stop offset="0.022" stop-color="#262626"/><stop offset="0.082" stop-color="#4e4e4e"/><stop offset="0.165" stop-color="#828281"/><stop offset="0.274" stop-color="#b2b2af"/><stop offset="0.419" stop-color="#c6c6c2"/><stop offset="0.673" stop-color="#d0d0cc"/><stop offset="0.855" stop-color="#c4c4c0"/><stop offset="0.930" stop-color="#b4b4b1"/><stop offset="0.975" stop-color="#8e8e8c"/><stop offset="1.000" stop-color="#666666"/></linearGradient><linearGradient id="mg58" x1="0" y1="0" x2="1" y2="0"><stop offset="0.000" stop-color="#080808"/><stop offset="0.022" stop-color="#262626"/><stop offset="0.082" stop-color="#4e4e4e"/><stop offset="0.164" stop-color="#828281"/><stop offset="0.274" stop-color="#b2b2af"/><stop offset="0.419" stop-color="#c6c6c2"/><stop offset="0.673" stop-color="#d0d0cc"/><stop offset="0.855" stop-color="#c4c4c0"/><stop offset="0.930" stop-color="#b4b4b1"/><stop offset="0.975" stop-color="#8e8e8c"/><stop offset="1.000" stop-color="#666666"/></linearGradient><linearGradient id="mg59" x1="0" y1="0" x2="1" y2="0"><stop offset="0.000" stop-color="#080808"/><stop offset="0.022" stop-color="#262626"/><stop offset="0.082" stop-color="#4e4e4e"/><stop offset="0.164" stop-color="#828281"/><stop offset="0.273" stop-color="#b2b2af"/><stop offset="0.419" stop-color="#c6c6c2"/><stop offset="0.673" stop-color="#d0d0cc"/><stop offset="0.855" stop-color="#c4c4c0"/><stop offset="0.930" stop-color="#b4b4b1"/><stop offset="0.975" stop-color="#8e8e8c"/><stop offset="1.000" stop-color="#666666"/></linearGradient><linearGradient id="mg60" x1="0" y1="0" x2="1" y2="0"><stop offset="0.000" stop-color="#080808"/><stop offset="0.022" stop-color="#262626"/><stop offset="0.082" stop-color="#4e4e4e"/><stop offset="0.164" stop-color="#828281"/><stop offset="0.273" stop-color="#b2b2af"/><stop offset="0.418" stop-color="#c6c6c2"/><stop offset="0.673" stop-color="#d0d0cc"/><stop offset="0.855" stop-color="#c4c4c0"/><stop offset="0.930" stop-color="#b4b4b1"/><stop offset="0.975" stop-color="#8e8e8c"/><stop offset="1.000" stop-color="#666666"/></linearGradient><linearGradient id="mg61" x1="0" y1="0" x2="1" y2="0"><stop offset="0.000" stop-color="#080808"/><stop offset="0.022" stop-color="#262626"/><stop offset="0.082" stop-color="#4e4e4e"/><stop offset="0.163" stop-color="#828281"/><stop offset="0.272" stop-color="#b2b2af"/><stop offset="0.418" stop-color="#c6c6c2"/><stop offset="0.673" stop-color="#d0d0cc"/><stop offset="0.854" stop-color="#c4c4c0"/><stop offset="0.930" stop-color="#b4b4b1"/><stop offset="0.975" stop-color="#8e8e8c"/><stop offset="1.000" stop-color="#666666"/></linearGradient><linearGradient id="mg62" x1="0" y1="0" x2="1" y2="0"><stop offset="0.000" stop-color="#080808"/><stop offset="0.022" stop-color="#262626"/><stop offset="0.082" stop-color="#4e4e4e"/><stop offset="0.163" stop-color="#828281"/><stop offset="0.272" stop-color="#b2b2af"/><stop offset="0.417" stop-color="#c6c6c2"/><stop offset="0.672" stop-color="#d0d0cc"/><stop offset="0.854" stop-color="#c4c4c0"/><stop offset="0.930" stop-color="#b4b4b1"/><stop offset="0.975" stop-color="#8e8e8c"/><stop offset="1.000" stop-color="#666666"/></linearGradient><linearGradient id="mg63" x1="0" y1="0" x2="1" y2="0"><stop offset="0.000" stop-color="#080808"/><stop offset="0.022" stop-color="#262626"/><stop offset="0.081" stop-color="#4e4e4e"/><stop offset="0.163" stop-color="#828281"/><stop offset="0.271" stop-color="#b2b2af"/><stop offset="0.417" stop-color="#c6c6c2"/><stop offset="0.672" stop-color="#d0d0cc"/><stop offset="0.854" stop-color="#c4c4c0"/><stop offset="0.930" stop-color="#b4b4b1"/><stop offset="0.975" stop-color="#8e8e8c"/><stop offset="1.000" stop-color="#666666"/></linearGradient><linearGradient id="mg64" x1="0" y1="0" x2="1" y2="0"><stop offset="0.000" stop-color="#080808"/><stop offset="0.022" stop-color="#262626"/><stop offset="0.081" stop-color="#4e4e4e"/><stop offset="0.162" stop-color="#828281"/><stop offset="0.271" stop-color="#b2b2af"/><stop offset="0.417" stop-color="#c6c6c2"/><stop offset="0.672" stop-color="#d0d0cc"/><stop offset="0.854" stop-color="#c4c4c0"/><stop offset="0.930" stop-color="#b4b4b1"/><stop offset="0.975" stop-color="#8e8e8c"/><stop offset="1.000" stop-color="#666666"/></linearGradient><linearGradient id="mg65" x1="0" y1="0" x2="1" y2="0"><stop offset="0.000" stop-color="#080808"/><stop offset="0.022" stop-color="#262626"/><stop offset="0.081" stop-color="#4e4e4e"/><stop offset="0.162" stop-color="#828281"/><stop offset="0.270" stop-color="#b2b2af"/><stop offset="0.416" stop-color="#c6c6c2"/><stop offset="0.672" stop-color="#d0d0cc"/><stop offset="0.854" stop-color="#c4c4c0"/><stop offset="0.930" stop-color="#b4b4b1"/><stop offset="0.975" stop-color="#8e8e8c"/><stop offset="1.000" stop-color="#666666"/></linearGradient><linearGradient id="mg66" x1="0" y1="0" x2="1" y2="0"><stop offset="0.000" stop-color="#080808"/><stop offset="0.022" stop-color="#262626"/><stop offset="0.081" stop-color="#4e4e4e"/><stop offset="0.162" stop-color="#828281"/><stop offset="0.270" stop-color="#b2b2af"/><stop offset="0.416" stop-color="#c6c6c2"/><stop offset="0.671" stop-color="#d0d0cc"/><stop offset="0.854" stop-color="#c4c4c0"/><stop offset="0.930" stop-color="#b4b4b1"/><stop offset="0.975" stop-color="#8e8e8c"/><stop offset="1.000" stop-color="#666666"/></linearGradient><linearGradient id="mg67" x1="0" y1="0" x2="1" y2="0"><stop offset="0.000" stop-color="#080808"/><stop offset="0.022" stop-color="#262626"/><stop offset="0.081" stop-color="#4e4e4e"/><stop offset="0.162" stop-color="#828281"/><stop offset="0.270" stop-color="#b2b2af"/><stop offset="0.416" stop-color="#c6c6c2"/><stop offset="0.671" stop-color="#d0d0cc"/><stop offset="0.854" stop-color="#c4c4c0"/><stop offset="0.930" stop-color="#b4b4b1"/><stop offset="0.975" stop-color="#8e8e8c"/><stop offset="1.000" stop-color="#666666"/></linearGradient><linearGradient id="mg68" x1="0" y1="0" x2="1" y2="0"><stop offset="0.000" stop-color="#080808"/><stop offset="0.022" stop-color="#262626"/><stop offset="0.081" stop-color="#4e4e4e"/><stop offset="0.162" stop-color="#828281"/><stop offset="0.270" stop-color="#b2b2af"/><stop offset="0.416" stop-color="#c6c6c2"/><stop offset="0.671" stop-color="#d0d0cc"/><stop offset="0.854" stop-color="#c4c4c0"/><stop offset="0.930" stop-color="#b4b4b1"/><stop offset="0.975" stop-color="#8e8e8c"/><stop offset="1.000" stop-color="#666666"/></linearGradient><linearGradient id="mg69" x1="0" y1="0" x2="1" y2="0"><stop offset="0.000" stop-color="#080808"/><stop offset="0.022" stop-color="#262626"/><stop offset="0.081" stop-color="#4e4e4e"/><stop offset="0.162" stop-color="#828281"/><stop offset="0.270" stop-color="#b2b2af"/><stop offset="0.416" stop-color="#c6c6c2"/><stop offset="0.671" stop-color="#d0d0cc"/><stop offset="0.854" stop-color="#c4c4c0"/><stop offset="0.930" stop-color="#b4b4b1"/><stop offset="0.975" stop-color="#8e8e8c"/><stop offset="1.000" stop-color="#666666"/></linearGradient><linearGradient id="mg70" x1="0" y1="0" x2="1" y2="0"><stop offset="0.000" stop-color="#080808"/><stop offset="0.022" stop-color="#262626"/><stop offset="0.081" stop-color="#4e4e4e"/><stop offset="0.162" stop-color="#828281"/><stop offset="0.270" stop-color="#b2b2af"/><stop offset="0.416" stop-color="#c6c6c2"/><stop offset="0.671" stop-color="#d0d0cc"/><stop offset="0.854" stop-color="#c4c4c0"/><stop offset="0.930" stop-color="#b4b4b1"/><stop offset="0.975" stop-color="#8e8e8c"/><stop offset="1.000" stop-color="#666666"/></linearGradient></defs>
<g clip-path="url(#mainc)"><rect x="780" y="195" width="230" height="700" fill="#c4c4c0"/><g filter="url(#vbl)">
<rect x="990.4" y="200" width="2.3" height="2.4" fill="url(#mg1)"/>
<rect x="987.8" y="202" width="4.5" height="2.4" fill="url(#mg1)"/>
<rect x="985.2" y="204" width="5.9" height="2.4" fill="url(#mg1)"/>
<rect x="982.7" y="206" width="7.4" height="2.4" fill="url(#mg1)"/>
<rect x="980.1" y="208" width="8.8" height="2.4" fill="url(#mg1)"/>
<rect x="977.5" y="210" width="10.2" height="2.4" fill="url(#mg2)"/>
<rect x="974.9" y="212" width="11.6" height="2.4" fill="url(#mg2)"/>
<rect x="972.3" y="214" width="13.1" height="2.4" fill="url(#mg2)"/>
<rect x="969.8" y="216" width="14.5" height="2.4" fill="url(#mg2)"/>
<rect x="967.2" y="218" width="15.9" height="2.4" fill="url(#mg2)"/>
<rect x="964.6" y="220" width="17.3" height="2.4" fill="url(#mg3)"/>
<rect x="962.0" y="222" width="18.8" height="2.4" fill="url(#mg3)"/>
<rect x="959.4" y="224" width="20.2" height="2.4" fill="url(#mg3)"/>
<rect x="956.8" y="226" width="21.7" height="2.4" fill="url(#mg3)"/>
<rect x="954.2" y="228" width="23.2" height="2.4" fill="url(#mg3)"/>
<rect x="951.5" y="230" width="24.7" height="2.4" fill="url(#mg4)"/>
<rect x="948.8" y="232" width="26.2" height="2.4" fill="url(#mg4)"/>
<rect x="946.2" y="234" width="27.7" height="2.4" fill="url(#mg4)"/>
<rect x="943.5" y="236" width="29.2" height="2.4" fill="url(#mg4)"/>
<rect x="940.9" y="238" width="30.7" height="2.4" fill="url(#mg4)"/>
<rect x="938.5" y="240" width="32.0" height="2.4" fill="url(#mg5)"/>
<rect x="937.0" y="242" width="32.3" height="2.4" fill="url(#mg5)"/>
<rect x="935.5" y="244" width="32.7" height="2.4" fill="url(#mg5)"/>
<rect x="934.0" y="246" width="33.1" height="2.4" fill="url(#mg5)"/>
<rect x="932.5" y="248" width="33.5" height="2.4" fill="url(#mg5)"/>
<rect x="931.0" y="250" width="33.9" height="2.4" fill="url(#mg6)"/>
<rect x="929.5" y="252" width="34.2" height="2.4" fill="url(#mg6)"/>
<rect x="928.0" y="254" width="34.6" height="2.4" fill="url(#mg6)"/>
<rect x="926.5" y="256" width="34.9" height="2.4" fill="url(#mg6)"/>
<rect x="925.2" y="258" width="35.1" height="2.4" fill="url(#mg6)"/>
<rect x="923.8" y="260" width="36.1" height="2.4" fill="url(#mg7)"/>
<rect x="922.5" y="262" width="37.0" height="2.4" fill="url(#mg7)"/>
<rect x="921.2" y="264" width="38.0" height="2.4" fill="url(#mg7)"/>
<rect x="919.8" y="266" width="39.0" height="2.4" fill="url(#mg7)"/>
<rect x="918.5" y="268" width="39.9" height="2.4" fill="url(#mg7)"/>
<rect x="917.2" y="270" width="40.9" height="2.4" fill="url(#mg8)"/>
<rect x="915.9" y="272" width="41.8" height="2.4" fill="url(#mg8)"/>
<rect x="914.5" y="274" width="42.8" height="2.4" fill="url(#mg8)"/>
<rect x="913.2" y="276" width="43.8" height="2.4" fill="url(#mg8)"/>
<rect x="911.9" y="278" width="44.7" height="2.4" fill="url(#mg8)"/>
<rect x="910.6" y="280" width="45.7" height="2.4" fill="url(#mg9)"/>
<rect x="909.3" y="282" width="46.5" height="2.4" fill="url(#mg9)"/>
<rect x="908.1" y="284" width="47.4" height="2.4" fill="url(#mg9)"/>
<rect x="906.9" y="286" width="48.2" height="2.4" fill="url(#mg9)"/>
<rect x="905.6" y="288" width="49.1" height="2.4" fill="url(#mg9)"/>
<rect x="904.4" y="290" width="49.9" height="2.4" fill="url(#mg10)"/>
<rect x="903.2" y="292" width="50.8" height="2.4" fill="url(#mg10)"/>
<rect x="902.0" y="294" width="51.7" height="2.4" fill="url(#mg10)"/>
<rect x="900.7" y="296" width="52.5" height="2.4" fill="url(#mg10)"/>
<rect x="899.5" y="298" width="53.4" height="2.4" fill="url(#mg10)"/>
<rect x="898.3" y="300" width="54.2" height="2.4" fill="url(#mg11)"/>
<rect x="897.0" y="302" width="55.1" height="2.4" fill="url(#mg11)"/>
<rect x="895.8" y="304" width="55.9" height="2.4" fill="url(#mg11)"/>
<rect x="894.6" y="306" width="56.7" height="2.4" fill="url(#mg11)"/>
<rect x="893.5" y="308" width="57.5" height="2.4" fill="url(#mg11)"/>
<rect x="892.5" y="310" width="58.2" height="2.4" fill="url(#mg12)"/>
<rect x="891.4" y="312" width="58.9" height="2.4" fill="url(#mg12)"/>
<rect x="890.3" y="314" width="59.6" height="2.4" fill="url(#mg12)"/>
<rect x="889.2" y="316" width="60.4" height="2.4" fill="url(#mg12)"/>
<rect x="888.1" y="318" width="61.1" height="2.4" fill="url(#mg12)"/>
<rect x="887.0" y="320" width="61.8" height="2.4" fill="url(#mg13)"/>
<rect x="886.0" y="322" width="62.6" height="2.4" fill="url(#mg13)"/>
<rect x="884.9" y="324" width="63.3" height="2.4" fill="url(#mg13)"/>
<rect x="883.8" y="326" width="64.1" height="2.4" fill="url(#mg13)"/>
<rect x="882.7" y="328" width="64.8" height="2.4" fill="url(#mg13)"/>
<rect x="881.6" y="330" width="65.6" height="2.4" fill="url(#mg14)"/>
<rect x="880.5" y="332" width="66.3" height="2.4" fill="url(#mg14)"/>
<rect x="879.5" y="334" width="67.1" height="2.4" fill="url(#mg14)"/>
<rect x="878.4" y="336" width="67.8" height="2.4" fill="url(#mg14)"/>
<rect x="877.3" y="338" width="68.6" height="2.4" fill="url(#mg14)"/>
<rect x="876.2" y="340" width="69.3" height="2.4" fill="url(#mg15)"/>
<rect x="875.2" y="342" width="70.0" height="2.4" fill="url(#mg15)"/>
<rect x="874.1" y="344" width="70.8" height="2.4" fill="url(#mg15)"/>
<rect x="873.0" y="346" width="71.7" height="2.4" fill="url(#mg15)"/>
<rect x="872.0" y="348" width="72.6" height="2.4" fill="url(#mg15)"/>
<rect x="870.9" y="350" width="73.5" height="2.4" fill="url(#mg16)"/>
<rect x="869.8" y="352" width="74.4" height="2.4" fill="url(#mg16)"/>
<rect x="868.8" y="354" width="75.3" height="2.4" fill="url(#mg16)"/>
<rect x="867.7" y="356" width="76.2" height="2.4" fill="url(#mg16)"/>
<rect x="866.6" y="358" width="77.1" height="2.4" fill="url(#mg16)"/>
<rect x="865.6" y="360" width="78.0" height="2.4" fill="url(#mg17)"/>
<rect x="864.6" y="362" width="78.9" height="2.4" fill="url(#mg17)"/>
<rect x="863.5" y="364" width="79.8" height="2.4" fill="url(#mg17)"/>
<rect x="862.5" y="366" width="80.6" height="2.4" fill="url(#mg17)"/>
<rect x="861.5" y="368" width="81.5" height="2.4" fill="url(#mg17)"/>
<rect x="860.4" y="370" width="82.4" height="2.4" fill="url(#mg18)"/>
<rect x="859.4" y="372" width="83.3" height="2.4" fill="url(#mg18)"/>
<rect x="858.4" y="374" width="84.1" height="2.4" fill="url(#mg18)"/>
<rect x="857.3" y="376" width="85.0" height="2.4" fill="url(#mg18)"/>
<rect x="856.4" y="378" width="85.8" height="2.4" fill="url(#mg18)"/>
<rect x="856.1" y="380" width="86.1" height="2.4" fill="url(#mg19)"/>
<rect x="855.7" y="382" width="86.5" height="2.4" fill="url(#mg19)"/>
<rect x="855.3" y="384" width="86.9" height="2.4" fill="url(#mg19)"/>
<rect x="855.0" y="386" width="87.2" height="2.4" fill="url(#mg19)"/>
<rect x="854.6" y="388" width="87.6" height="2.4" fill="url(#mg19)"/>
<rect x="854.2" y="390" width="88.0" height="2.4" fill="url(#mg20)"/>
<rect x="853.9" y="392" width="88.3" height="2.4" fill="url(#mg20)"/>
<rect x="853.5" y="394" width="88.7" height="2.4" fill="url(#mg20)"/>
<rect x="853.1" y="396" width="89.1" height="2.4" fill="url(#mg20)"/>
<rect x="852.8" y="398" width="89.7" height="2.4" fill="url(#mg20)"/>
<rect x="852.4" y="400" width="90.3" height="2.4" fill="url(#mg21)"/>
<rect x="852.0" y="402" width="91.0" height="2.4" fill="url(#mg21)"/>
<rect x="851.7" y="404" width="91.6" height="2.4" fill="url(#mg21)"/>
<rect x="851.3" y="406" width="92.2" height="2.4" fill="url(#mg21)"/>
<rect x="850.9" y="408" width="92.9" height="2.4" fill="url(#mg21)"/>
<rect x="850.6" y="410" width="93.5" height="2.4" fill="url(#mg22)"/>
<rect x="850.2" y="412" width="94.1" height="2.4" fill="url(#mg22)"/>
<rect x="849.8" y="414" width="94.8" height="2.4" fill="url(#mg22)"/>
<rect x="849.5" y="416" width="95.4" height="2.4" fill="url(#mg22)"/>
<rect x="849.1" y="418" width="96.0" height="2.4" fill="url(#mg22)"/>
<rect x="848.7" y="420" width="96.7" height="2.4" fill="url(#mg23)"/>
<rect x="848.3" y="422" width="97.3" height="2.4" fill="url(#mg23)"/>
<rect x="848.0" y="424" width="97.9" height="2.4" fill="url(#mg23)"/>
<rect x="847.6" y="426" width="98.6" height="2.4" fill="url(#mg23)"/>
<rect x="847.2" y="428" width="99.2" height="2.4" fill="url(#mg23)"/>
<rect x="846.8" y="430" width="99.9" height="2.4" fill="url(#mg24)"/>
<rect x="846.5" y="432" width="100.5" height="2.4" fill="url(#mg24)"/>
<rect x="846.1" y="434" width="101.2" height="2.4" fill="url(#mg24)"/>
<rect x="845.7" y="436" width="101.9" height="2.4" fill="url(#mg24)"/>
<rect x="845.3" y="438" width="102.5" height="2.4" fill="url(#mg24)"/>
<rect x="845.0" y="440" width="103.2" height="2.4" fill="url(#mg25)"/>
<rect x="844.6" y="442" width="103.9" height="2.4" fill="url(#mg25)"/>
<rect x="844.2" y="444" width="104.6" height="2.4" fill="url(#mg25)"/>
<rect x="843.8" y="446" width="105.3" height="2.4" fill="url(#mg25)"/>
<rect x="843.4" y="448" width="106.0" height="2.4" fill="url(#mg25)"/>
<rect x="842.9" y="450" width="106.7" height="2.4" fill="url(#mg26)"/>
<rect x="842.5" y="452" width="107.5" height="2.4" fill="url(#mg26)"/>
<rect x="842.1" y="454" width="108.2" height="2.4" fill="url(#mg26)"/>
<rect x="841.6" y="456" width="108.9" height="2.4" fill="url(#mg26)"/>
<rect x="841.2" y="458" width="109.7" height="2.4" fill="url(#mg26)"/>
<rect x="840.8" y="460" width="110.4" height="2.4" fill="url(#mg27)"/>
<rect x="840.3" y="462" width="111.1" height="2.4" fill="url(#mg27)"/>
<rect x="839.9" y="464" width="111.8" height="2.4" fill="url(#mg27)"/>
<rect x="839.5" y="466" width="112.7" height="2.4" fill="url(#mg27)"/>
<rect x="839.1" y="468" width="113.7" height="2.4" fill="url(#mg27)"/>
<rect x="838.6" y="470" width="114.6" height="2.4" fill="url(#mg28)"/>
<rect x="838.4" y="472" width="115.4" height="2.4" fill="url(#mg28)"/>
<rect x="838.3" y="474" width="116.0" height="2.4" fill="url(#mg28)"/>
<rect x="838.1" y="476" width="116.7" height="2.4" fill="url(#mg28)"/>
<rect x="838.0" y="478" width="117.3" height="2.4" fill="url(#mg28)"/>
<rect x="837.8" y="480" width="118.0" height="2.4" fill="url(#mg29)"/>
<rect x="837.7" y="482" width="118.6" height="2.4" fill="url(#mg29)"/>
<rect x="837.6" y="484" width="119.3" height="2.4" fill="url(#mg29)"/>
<rect x="837.4" y="486" width="119.9" height="2.4" fill="url(#mg29)"/>
<rect x="837.3" y="488" width="120.6" height="2.4" fill="url(#mg29)"/>
<rect x="837.1" y="490" width="121.2" height="2.4" fill="url(#mg30)"/>
<rect x="837.0" y="492" width="121.9" height="2.4" fill="url(#mg30)"/>
<rect x="836.9" y="494" width="122.5" height="2.4" fill="url(#mg30)"/>
<rect x="836.7" y="496" width="123.2" height="2.4" fill="url(#mg30)"/>
<rect x="836.6" y="498" width="123.8" height="2.4" fill="url(#mg30)"/>
<rect x="836.4" y="500" width="124.3" height="2.4" fill="url(#mg31)"/>
<rect x="836.3" y="502" width="124.9" height="2.4" fill="url(#mg31)"/>
<rect x="836.2" y="504" width="125.4" height="2.4" fill="url(#mg31)"/>
<rect x="836.1" y="506" width="125.9" height="2.4" fill="url(#mg31)"/>
<rect x="835.9" y="508" width="126.5" height="2.4" fill="url(#mg31)"/>
<rect x="835.8" y="510" width="127.0" height="2.4" fill="url(#mg32)"/>
<rect x="835.7" y="512" width="127.5" height="2.4" fill="url(#mg32)"/>
<rect x="835.5" y="514" width="128.1" height="2.4" fill="url(#mg32)"/>
<rect x="835.4" y="516" width="128.6" height="2.4" fill="url(#mg32)"/>
<rect x="835.3" y="518" width="129.1" height="2.4" fill="url(#mg32)"/>
<rect x="835.1" y="520" width="129.7" height="2.4" fill="url(#mg33)"/>
<rect x="835.0" y="522" width="130.2" height="2.4" fill="url(#mg33)"/>
<rect x="834.9" y="524" width="130.8" height="2.4" fill="url(#mg33)"/>
<rect x="834.8" y="526" width="131.3" height="2.4" fill="url(#mg33)"/>
<rect x="834.6" y="528" width="131.8" height="2.4" fill="url(#mg33)"/>
<rect x="834.5" y="530" width="132.4" height="2.4" fill="url(#mg34)"/>
<rect x="834.4" y="532" width="132.9" height="2.4" fill="url(#mg34)"/>
<rect x="834.2" y="534" width="133.4" height="2.4" fill="url(#mg34)"/>
<rect x="834.1" y="536" width="133.8" height="2.4" fill="url(#mg34)"/>
<rect x="834.0" y="538" width="134.3" height="2.4" fill="url(#mg34)"/>
<rect x="833.8" y="540" width="134.8" height="2.4" fill="url(#mg35)"/>
<rect x="833.6" y="542" width="135.2" height="2.4" fill="url(#mg35)"/>
<rect x="833.4" y="544" width="135.7" height="2.4" fill="url(#mg35)"/>
<rect x="833.3" y="546" width="136.2" height="2.4" fill="url(#mg35)"/>
<rect x="833.1" y="548" width="136.6" height="2.4" fill="url(#mg35)"/>
<rect x="832.9" y="550" width="137.1" height="2.4" fill="url(#mg36)"/>
<rect x="832.8" y="552" width="137.6" height="2.4" fill="url(#mg36)"/>
<rect x="832.6" y="554" width="138.1" height="2.4" fill="url(#mg36)"/>
<rect x="832.4" y="556" width="138.5" height="2.4" fill="url(#mg36)"/>
<rect x="832.2" y="558" width="139.0" height="2.4" fill="url(#mg36)"/>
<rect x="832.1" y="560" width="139.5" height="2.4" fill="url(#mg37)"/>
<rect x="831.9" y="562" width="139.9" height="2.4" fill="url(#mg37)"/>
<rect x="831.7" y="564" width="140.4" height="2.4" fill="url(#mg37)"/>
<rect x="831.5" y="566" width="140.9" height="2.4" fill="url(#mg37)"/>
<rect x="831.4" y="568" width="141.4" height="2.4" fill="url(#mg37)"/>
<rect x="831.2" y="570" width="141.8" height="2.4" fill="url(#mg38)"/>
<rect x="830.9" y="572" width="142.3" height="2.4" fill="url(#mg38)"/>
<rect x="830.6" y="574" width="142.8" height="2.4" fill="url(#mg38)"/>
<rect x="830.3" y="576" width="143.3" height="2.4" fill="url(#mg38)"/>
<rect x="829.9" y="578" width="143.8" height="2.4" fill="url(#mg38)"/>
<rect x="829.6" y="580" width="144.3" height="2.4" fill="url(#mg39)"/>
<rect x="829.3" y="582" width="144.8" height="2.4" fill="url(#mg39)"/>
<rect x="829.0" y="584" width="145.3" height="2.4" fill="url(#mg39)"/>
<rect x="828.7" y="586" width="145.8" height="2.4" fill="url(#mg39)"/>
<rect x="828.4" y="588" width="146.3" height="2.4" fill="url(#mg39)"/>
<rect x="828.1" y="590" width="146.7" height="2.4" fill="url(#mg40)"/>
<rect x="827.8" y="592" width="147.2" height="2.4" fill="url(#mg40)"/>
<rect x="827.5" y="594" width="147.7" height="2.4" fill="url(#mg40)"/>
<rect x="827.2" y="596" width="148.2" height="2.4" fill="url(#mg40)"/>
<rect x="826.9" y="598" width="148.7" height="2.4" fill="url(#mg40)"/>
<rect x="826.5" y="600" width="149.2" height="2.4" fill="url(#mg41)"/>
<rect x="826.2" y="602" width="149.7" height="2.4" fill="url(#mg41)"/>
<rect x="825.9" y="604" width="150.2" height="2.4" fill="url(#mg41)"/>
<rect x="825.6" y="606" width="150.7" height="2.4" fill="url(#mg41)"/>
<rect x="825.3" y="608" width="151.2" height="2.4" fill="url(#mg41)"/>
<rect x="825.0" y="610" width="151.7" height="2.4" fill="url(#mg42)"/>
<rect x="824.7" y="612" width="152.2" height="2.4" fill="url(#mg42)"/>
<rect x="824.2" y="614" width="152.9" height="2.4" fill="url(#mg42)"/>
<rect x="823.8" y="616" width="153.6" height="2.4" fill="url(#mg42)"/>
<rect x="823.3" y="618" width="154.3" height="2.4" fill="url(#mg42)"/>
<rect x="822.9" y="620" width="155.0" height="2.4" fill="url(#mg43)"/>
<rect x="822.4" y="622" width="155.6" height="2.4" fill="url(#mg43)"/>
<rect x="821.9" y="624" width="156.3" height="2.4" fill="url(#mg43)"/>
<rect x="821.5" y="626" width="157.0" height="2.4" fill="url(#mg43)"/>
<rect x="821.0" y="628" width="157.7" height="2.4" fill="url(#mg43)"/>
<rect x="820.6" y="630" width="158.4" height="2.4" fill="url(#mg44)"/>
<rect x="820.1" y="632" width="159.1" height="2.4" fill="url(#mg44)"/>
<rect x="819.7" y="634" width="159.8" height="2.4" fill="url(#mg44)"/>
<rect x="819.2" y="636" width="160.5" height="2.4" fill="url(#mg44)"/>
<rect x="818.7" y="638" width="161.1" height="2.4" fill="url(#mg44)"/>
<rect x="818.3" y="640" width="161.8" height="2.4" fill="url(#mg45)"/>
<rect x="817.8" y="642" width="162.5" height="2.4" fill="url(#mg45)"/>
<rect x="817.4" y="644" width="163.2" height="2.4" fill="url(#mg45)"/>
<rect x="816.9" y="646" width="163.9" height="2.4" fill="url(#mg45)"/>
<rect x="816.5" y="648" width="164.5" height="2.4" fill="url(#mg45)"/>
<rect x="816.1" y="650" width="165.2" height="2.4" fill="url(#mg46)"/>
<rect x="815.7" y="652" width="165.8" height="2.4" fill="url(#mg46)"/>
<rect x="815.4" y="654" width="166.4" height="2.4" fill="url(#mg46)"/>
<rect x="815.0" y="656" width="167.0" height="2.4" fill="url(#mg46)"/>
<rect x="814.6" y="658" width="167.6" height="2.4" fill="url(#mg46)"/>
<rect x="814.2" y="660" width="168.2" height="2.4" fill="url(#mg47)"/>
<rect x="813.9" y="662" width="168.8" height="2.4" fill="url(#mg47)"/>
<rect x="813.5" y="664" width="169.5" height="2.4" fill="url(#mg47)"/>
<rect x="813.1" y="666" width="170.1" height="2.4" fill="url(#mg47)"/>
<rect x="812.7" y="668" width="170.7" height="2.4" fill="url(#mg47)"/>
<rect x="812.4" y="670" width="171.3" height="2.4" fill="url(#mg48)"/>
<rect x="812.0" y="672" width="172.0" height="2.4" fill="url(#mg48)"/>
<rect x="811.6" y="674" width="172.6" height="2.4" fill="url(#mg48)"/>
<rect x="811.2" y="676" width="173.2" height="2.4" fill="url(#mg48)"/>
<rect x="810.8" y="678" width="173.8" height="2.4" fill="url(#mg48)"/>
<rect x="810.5" y="680" width="174.5" height="2.4" fill="url(#mg49)"/>
<rect x="810.1" y="682" width="175.1" height="2.4" fill="url(#mg49)"/>
<rect x="809.7" y="684" width="175.7" height="2.4" fill="url(#mg49)"/>
<rect x="809.3" y="686" width="176.3" height="2.4" fill="url(#mg49)"/>
<rect x="809.0" y="688" width="177.0" height="2.4" fill="url(#mg49)"/>
<rect x="808.6" y="690" width="177.6" height="2.4" fill="url(#mg50)"/>
<rect x="808.2" y="692" width="178.2" height="2.4" fill="url(#mg50)"/>
<rect x="807.8" y="694" width="178.8" height="2.4" fill="url(#mg50)"/>
<rect x="807.5" y="696" width="179.5" height="2.4" fill="url(#mg50)"/>
<rect x="807.1" y="698" width="180.1" height="2.4" fill="url(#mg50)"/>
<rect x="806.7" y="700" width="180.7" height="2.4" fill="url(#mg51)"/>
<rect x="806.4" y="702" width="181.4" height="2.4" fill="url(#mg51)"/>
<rect x="806.0" y="704" width="182.0" height="2.4" fill="url(#mg51)"/>
<rect x="805.7" y="706" width="182.6" height="2.4" fill="url(#mg51)"/>
<rect x="805.3" y="708" width="183.3" height="2.4" fill="url(#mg51)"/>
<rect x="805.0" y="710" width="183.9" height="2.4" fill="url(#mg52)"/>
<rect x="804.6" y="712" width="184.6" height="2.4" fill="url(#mg52)"/>
<rect x="804.2" y="714" width="185.2" height="2.4" fill="url(#mg52)"/>
<rect x="803.9" y="716" width="185.8" height="2.4" fill="url(#mg52)"/>
<rect x="803.5" y="718" width="186.5" height="2.4" fill="url(#mg52)"/>
<rect x="803.2" y="720" width="187.1" height="2.4" fill="url(#mg53)"/>
<rect x="802.8" y="722" width="187.8" height="2.4" fill="url(#mg53)"/>
<rect x="802.5" y="724" width="188.4" height="2.4" fill="url(#mg53)"/>
<rect x="802.1" y="726" width="189.0" height="2.4" fill="url(#mg53)"/>
<rect x="801.8" y="728" width="189.7" height="2.4" fill="url(#mg53)"/>
<rect x="801.4" y="730" width="190.3" height="2.4" fill="url(#mg54)"/>
<rect x="801.1" y="732" width="190.9" height="2.4" fill="url(#mg54)"/>
<rect x="800.7" y="734" width="191.6" height="2.4" fill="url(#mg54)"/>
<rect x="800.4" y="736" width="192.2" height="2.4" fill="url(#mg54)"/>
<rect x="800.0" y="738" width="192.9" height="2.4" fill="url(#mg54)"/>
<rect x="799.6" y="740" width="193.5" height="2.4" fill="url(#mg55)"/>
<rect x="799.3" y="742" width="194.1" height="2.4" fill="url(#mg55)"/>
<rect x="798.9" y="744" width="194.8" height="2.4" fill="url(#mg55)"/>
<rect x="798.7" y="746" width="195.3" height="2.4" fill="url(#mg55)"/>
<rect x="798.5" y="748" width="195.8" height="2.4" fill="url(#mg55)"/>
<rect x="798.3" y="750" width="196.3" height="2.4" fill="url(#mg56)"/>
<rect x="798.1" y="752" width="196.8" height="2.4" fill="url(#mg56)"/>
<rect x="797.8" y="754" width="197.2" height="2.4" fill="url(#mg56)"/>
<rect x="797.6" y="756" width="197.6" height="2.4" fill="url(#mg56)"/>
<rect x="797.4" y="758" width="198.1" height="2.4" fill="url(#mg56)"/>
<rect x="797.2" y="760" width="198.5" height="2.4" fill="url(#mg57)"/>
<rect x="797.0" y="762" width="199.0" height="2.4" fill="url(#mg57)"/>
<rect x="796.8" y="764" width="199.4" height="2.4" fill="url(#mg57)"/>
<rect x="796.5" y="766" width="199.9" height="2.4" fill="url(#mg57)"/>
<rect x="796.3" y="768" width="200.3" height="2.4" fill="url(#mg57)"/>
<rect x="796.1" y="770" width="200.8" height="2.4" fill="url(#mg58)"/>
<rect x="795.9" y="772" width="201.2" height="2.4" fill="url(#mg58)"/>
<rect x="795.7" y="774" width="201.7" height="2.4" fill="url(#mg58)"/>
<rect x="795.5" y="776" width="202.1" height="2.4" fill="url(#mg58)"/>
<rect x="795.2" y="778" width="202.6" height="2.4" fill="url(#mg58)"/>
<rect x="795.0" y="780" width="203.0" height="2.4" fill="url(#mg59)"/>
<rect x="794.8" y="782" width="203.5" height="2.4" fill="url(#mg59)"/>
<rect x="794.6" y="784" width="203.9" height="2.4" fill="url(#mg59)"/>
<rect x="794.4" y="786" width="204.3" height="2.4" fill="url(#mg59)"/>
<rect x="794.2" y="788" width="204.8" height="2.4" fill="url(#mg59)"/>
<rect x="794.0" y="790" width="205.2" height="2.4" fill="url(#mg60)"/>
<rect x="793.8" y="792" width="205.7" height="2.4" fill="url(#mg60)"/>
<rect x="793.6" y="794" width="206.1" height="2.4" fill="url(#mg60)"/>
<rect x="793.4" y="796" width="206.5" height="2.4" fill="url(#mg60)"/>
<rect x="793.2" y="798" width="206.9" height="2.4" fill="url(#mg60)"/>
<rect x="793.0" y="800" width="207.2" height="2.4" fill="url(#mg61)"/>
<rect x="792.8" y="802" width="207.6" height="2.4" fill="url(#mg61)"/>
<rect x="792.6" y="804" width="207.9" height="2.4" fill="url(#mg61)"/>
<rect x="792.4" y="806" width="208.3" height="2.4" fill="url(#mg61)"/>
<rect x="792.2" y="808" width="208.6" height="2.4" fill="url(#mg61)"/>
<rect x="792.0" y="810" width="208.9" height="2.4" fill="url(#mg62)"/>
<rect x="791.8" y="812" width="209.3" height="2.4" fill="url(#mg62)"/>
<rect x="791.6" y="814" width="209.6" height="2.4" fill="url(#mg62)"/>
<rect x="791.4" y="816" width="210.0" height="2.4" fill="url(#mg62)"/>
<rect x="791.2" y="818" width="210.3" height="2.4" fill="url(#mg62)"/>
<rect x="791.0" y="820" width="210.7" height="2.4" fill="url(#mg63)"/>
<rect x="790.8" y="822" width="211.0" height="2.4" fill="url(#mg63)"/>
<rect x="790.7" y="824" width="211.1" height="2.4" fill="url(#mg63)"/>
<rect x="790.5" y="826" width="211.2" height="2.4" fill="url(#mg63)"/>
<rect x="790.4" y="828" width="211.3" height="2.4" fill="url(#mg63)"/>
<rect x="790.3" y="830" width="211.4" height="2.4" fill="url(#mg64)"/>
<rect x="790.2" y="832" width="211.5" height="2.4" fill="url(#mg64)"/>
<rect x="790.0" y="834" width="211.6" height="2.4" fill="url(#mg64)"/>
<rect x="789.9" y="836" width="211.7" height="2.4" fill="url(#mg64)"/>
<rect x="789.8" y="838" width="211.8" height="2.4" fill="url(#mg64)"/>
<rect x="789.7" y="840" width="211.9" height="2.4" fill="url(#mg65)"/>
<rect x="789.5" y="842" width="212.0" height="2.4" fill="url(#mg65)"/>
<rect x="789.4" y="844" width="212.1" height="2.4" fill="url(#mg65)"/>
<rect x="789.3" y="846" width="212.1" height="2.4" fill="url(#mg65)"/>
<rect x="789.2" y="848" width="212.2" height="2.4" fill="url(#mg65)"/>
<rect x="789.0" y="850" width="212.4" height="2.4" fill="url(#mg66)"/>
<rect x="789.0" y="852" width="212.3" height="2.4" fill="url(#mg66)"/>
<rect x="789.0" y="854" width="212.3" height="2.4" fill="url(#mg66)"/>
<rect x="789.0" y="856" width="212.2" height="2.4" fill="url(#mg66)"/>
<rect x="789.0" y="858" width="212.2" height="2.4" fill="url(#mg66)"/>
<rect x="789.0" y="860" width="212.2" height="2.4" fill="url(#mg67)"/>
<rect x="789.0" y="862" width="212.1" height="2.4" fill="url(#mg67)"/>
<rect x="789.0" y="864" width="212.5" height="2.4" fill="url(#mg67)"/>
<rect x="789.0" y="866" width="212.5" height="2.4" fill="url(#mg67)"/>
<rect x="789.0" y="868" width="212.5" height="2.4" fill="url(#mg67)"/>
<rect x="789.0" y="870" width="212.5" height="2.4" fill="url(#mg68)"/>
<rect x="789.0" y="872" width="212.5" height="2.4" fill="url(#mg68)"/>
<rect x="789.0" y="874" width="212.5" height="2.4" fill="url(#mg68)"/>
<rect x="789.0" y="876" width="212.5" height="2.4" fill="url(#mg68)"/>
<rect x="789.0" y="878" width="212.5" height="2.4" fill="url(#mg68)"/>
<rect x="789.0" y="880" width="212.5" height="2.4" fill="url(#mg69)"/>
<rect x="789.0" y="882" width="212.5" height="2.4" fill="url(#mg69)"/>
<rect x="789.0" y="884" width="212.5" height="2.4" fill="url(#mg69)"/>
<rect x="789.0" y="886" width="212.5" height="2.4" fill="url(#mg69)"/>
<rect x="789.0" y="888" width="212.5" height="2.4" fill="url(#mg69)"/>
<rect x="789.0" y="890" width="212.5" height="2.4" fill="url(#mg70)"/>
<rect x="789.0" y="892" width="212.5" height="2.4" fill="url(#mg70)"/>
<rect x="789.0" y="894" width="212.5" height="2.4" fill="url(#mg70)"/>
</g>
<polyline points="992.2,201.4 959.3,226.9 939.4,241.9 927.4,257.8 911.5,281.7 895.5,307.7 878.0,340.0 867.6,359.5 857.0,380.0 850.4,416.0 844.7,446.5 839.0,473.0 837.0,501.6 834.5,540.0 831.7,572.3 825.2,614.3 817.1,649.8 807.4,701.4 799.4,746.6 794.5,791.9 791.3,824.2 789.5,852.9" fill="none" stroke="#000" stroke-width="3" filter="url(#bl2)"/>
<rect x="780" y="195" width="230" height="700" filter="url(#tex)" opacity="0.4" style="mix-blend-mode:multiply"/>
</g>
</svg>
<div class="a" id="cmd"></div>
<svg class="a" style="left:0;top:0" width="1920" height="1053">
<rect x="0" y="0" width="40" height="41" fill="#1c1c1c"/>
<defs><linearGradient id="logog" x1="0" y1="0" x2="1" y2="1"><stop offset="0" stop-color="#5fb9b8"/><stop offset="0.45" stop-color="#2a8a89"/><stop offset="0.5" stop-color="#0f6463"/><stop offset="1" stop-color="#0a4a4a"/></linearGradient></defs>
<rect x="1" y="1" width="38" height="39" fill="url(#logog)"/>
<path d="M23,9 C14,9 6,13 5,21 C4,29 9,31 17,31 C25,31 27,26 26,19 C25,14 19,13 13,16 C9,19 11,23 16,24 C21,25 23,23 20,21" fill="none" stroke="#fff" stroke-width="2.2" stroke-linecap="round"/>
<path d="M29,19 L36,19 L32.5,23 Z" fill="#000"/>
<path d="M50.5,5.5 H61 L65,9.5 V17.5 H50.5 Z" fill="#dfe1e6" stroke="#222" stroke-width="1"/>
<path d="M74.5,6 H80 L81.5,7.5 H86 V10 H89.5 L86,15.5 H74.5 Z" fill="#cdd0d6" stroke="#222" stroke-width="1"/>
<rect x="99.5" y="3.5" width="13" height="13" fill="#5a6678" stroke="#222" stroke-width="1"/>
<rect x="102" y="4" width="8" height="5" fill="#e8e8ea"/>
<rect x="102" y="11" width="8" height="5" fill="#e8e8ea"/>
<path d="M122,10 L127,5 V8 H131 C135,8 137,10 137,13 V16 H134 V13 C134,12 133,11 131,11 H127 V14 Z" fill="#e6e8ec" stroke="#222" stroke-width="1"/>
<path d="M145,10.5 H150 L147.5,13 Z" fill="#444"/>
<path d="M173,10 L168,5 V8 H164 C160,8 158,10 158,13 V16 H161 V13 C161,12 162,11 164,11 H168 V14 Z" fill="#e6e8ec" stroke="#222" stroke-width="1"/>
<path d="M181,10.5 H186 L183.5,13 Z" fill="#444"/>
<rect x="194.5" y="4.5" width="12" height="10" fill="#666" stroke="#f0f0f0" stroke-width="1"/>
<rect x="202.5" y="10.5" width="7" height="8" fill="#666" stroke="#f0f0f0" stroke-width="1"/>
<rect x="217" y="7" width="7" height="1.5" fill="#000"/>
<path d="M216.5,9.5 H224.5 L220.5,13.5 Z" fill="#000"/>
<text x="672" y="16" font-family="Liberation Sans" font-size="12" fill="#f4f4f4" text-anchor="start" font-weight="bold" font-style="normal" textLength="271" lengthAdjust="spacingAndGlyphs">Autodesk 3ds Max&#160; 2011&#160; - Unregistered Version</text>
<text x="956" y="16" font-family="Liberation Sans" font-size="12" fill="#f4f4f4" text-anchor="start" font-weight="bold" font-style="normal" textLength="101" lengthAdjust="spacingAndGlyphs">BoneSpike04.max</text>
<path d="M1507,7 L1511,11 L1507,15 Z" fill="#111"/>
<rect x="1517.5" y="0.5" width="178" height="20" fill="#f6f6f6" stroke="#8a8a8a" stroke-width="1"/>
<text x="1522" y="16" font-family="Liberation Sans" font-size="12" fill="#777" text-anchor="start" font-weight="normal" font-style="italic" textLength="128" lengthAdjust="spacingAndGlyphs">Type a keyword or phrase</text>
<rect x="1702" y="4.5" width="4.5" height="5" fill="#e8e8e8" stroke="#333" stroke-width="1"/>
<rect x="1701" y="9" width="6.5" height="9.5" fill="#f0f0f0" stroke="#333" stroke-width="1"/>
<rect x="1702" y="12" width="4.5" height="2" fill="#999"/>
<rect x="1710.5" y="4.5" width="4.5" height="5" fill="#e8e8e8" stroke="#333" stroke-width="1"/>
<rect x="1709.5" y="9" width="6.5" height="9.5" fill="#f0f0f0" stroke="#333" stroke-width="1"/>
<rect x="1710.5" y="12" width="4.5" height="2" fill="#999"/>
<rect x="1707.5" y="9" width="2" height="5" fill="#bbb"/>
<path d="M1724,10 H1729 L1726.5,12.5 Z" fill="#555"/>
<line x1="1743.5" y1="9.5" x2="1751" y2="17" stroke="#333" stroke-width="3.4"/>
<line x1="1743.5" y1="9.5" x2="1751" y2="17" stroke="#eee" stroke-width="1.7"/>
<circle cx="1741.5" cy="7" r="3.3" fill="#eee" stroke="#333" stroke-width="1.3"/>
<path d="M1762.5,18.5 L1766.5,13 L1770.5,18.5 Z" fill="#eee" stroke="#333" stroke-width="1"/>
<ellipse cx="1767" cy="10" rx="5.5" ry="3.2" fill="#eee" stroke="#333" stroke-width="1" transform="rotate(45 1767 10)"/>
<line x1="1769" y1="8" x2="1774" y2="4" stroke="#222" stroke-width="1.4"/>
<path d="M1792,3.5 L1794,8 L1799,8.5 L1795.5,11.5 L1797,17.5 L1792,14.5 L1787,17.5 L1788.5,11.5 L1785,8.5 L1790,8 Z" fill="#f2f2f2" stroke="#222" stroke-width="1"/>
<line x1="1810.5" y1="2" x2="1810.5" y2="20" stroke="#6a6a6a" stroke-width="1"/>
<circle cx="1828" cy="11" r="7.5" fill="#fff" stroke="#333" stroke-width="1"/>
<text x="1828" y="15.5" font-family="Liberation Sans" font-size="12" fill="#1a48c8" text-anchor="middle" font-weight="bold" font-style="normal">?</text>
<path d="M1843,10 H1848 L1845.5,12.5 Z" fill="#555"/>
<rect x="1872.5" y="14" width="9.5" height="2.3" fill="#111"/>
<rect x="1891.5" y="7.5" width="8" height="6.5" fill="none" stroke="#111" stroke-width="1.4"/>
<rect x="1888.5" y="11" width="8" height="6.5" fill="#999" stroke="#111" stroke-width="1.4"/>
<line x1="1906.5" y1="8.5" x2="1913.5" y2="15.5" stroke="#111" stroke-width="2.4"/>
<line x1="1913.5" y1="8.5" x2="1906.5" y2="15.5" stroke="#111" stroke-width="2.4"/>
<text x="53" y="39" font-family="Liberation Sans" font-size="11" fill="#f2f2f2" text-anchor="start" font-weight="normal" font-style="normal" textLength="17" lengthAdjust="spacingAndGlyphs">Edit</text>
<text x="92" y="39" font-family="Liberation Sans" font-size="11" fill="#f2f2f2" text-anchor="start" font-weight="normal" font-style="normal" textLength="24" lengthAdjust="spacingAndGlyphs">Tools</text>
<text x="137.5" y="39" font-family="Liberation Sans" font-size="11" fill="#f2f2f2" text-anchor="start" font-weight="normal" font-style="normal" textLength="29" lengthAdjust="spacingAndGlyphs">Group</text>
<text x="187.5" y="39" font-family="Liberation Sans" font-size="11" fill="#f2f2f2" text-anchor="start" font-weight="normal" font-style="normal" textLength="27" lengthAdjust="spacingAndGlyphs">Views</text>
<text x="235" y="39" font-family="Liberation Sans" font-size="11" fill="#f2f2f2" text-anchor="start" font-weight="normal" font-style="normal" textLength="33" lengthAdjust="spacingAndGlyphs">Create</text>
<text x="286" y="39" font-family="Liberation Sans" font-size="11" fill="#f2f2f2" text-anchor="start" font-weight="normal" font-style="normal" textLength="43" lengthAdjust="spacingAndGlyphs">Modifiers</text>
<text x="343" y="39" font-family="Liberation Sans" font-size="11" fill="#f2f2f2" text-anchor="start" font-weight="normal" font-style="normal" textLength="47.5" lengthAdjust="spacingAndGlyphs">Animation</text>
<text x="404" y="39" font-family="Liberation Sans" font-size="11" fill="#f2f2f2" text-anchor="start" font-weight="normal" font-style="normal" textLength="65" lengthAdjust="spacingAndGlyphs">Graph Editors</text>
<text x="486" y="39" font-family="Liberation Sans" font-size="11" fill="#f2f2f2" text-anchor="start" font-weight="normal" font-style="normal" textLength="49.5" lengthAdjust="spacingAndGlyphs">Rendering</text>
<text x="556" y="39" font-family="Liberation Sans" font-size="11" fill="#f2f2f2" text-anchor="start" font-weight="normal" font-style="normal" textLength="49" lengthAdjust="spacingAndGlyphs">Customize</text>
<text x="626" y="39" font-family="Liberation Sans" font-size="11" fill="#f2f2f2" text-anchor="start" font-weight="normal" font-style="normal" textLength="48.5" lengthAdjust="spacingAndGlyphs">MAXScript</text>
<text x="692.5" y="39" font-family="Liberation Sans" font-size="11" fill="#f2f2f2" text-anchor="start" font-weight="normal" font-style="normal" textLength="58.5" lengthAdjust="spacingAndGlyphs">SC2ArtTools</text>
<text x="768" y="39" font-family="Liberation Sans" font-size="11" fill="#f2f2f2" text-anchor="start" font-weight="normal" font-style="normal" textLength="21" lengthAdjust="spacingAndGlyphs">Help</text>
<line x1="1233.5" y1="44" x2="1233.5" y2="83" stroke="#111" stroke-width="1.5"/>
<line x1="0" y1="82.5" x2="1234" y2="82.5" stroke="#161616" stroke-width="1.5"/>
<line x1="1236" y1="82.5" x2="1311" y2="82.5" stroke="#161616" stroke-width="1.5"/>
<line x1="1310.5" y1="44" x2="1310.5" y2="83" stroke="#111" stroke-width="1.5"/>
<line x1="3.5" y1="48" x2="3.5" y2="80" stroke="#151515" stroke-width="1.5"/>
<line x1="6.5" y1="48" x2="6.5" y2="80" stroke="#151515" stroke-width="1.5"/>
<line x1="1239.5" y1="48" x2="1239.5" y2="80" stroke="#151515" stroke-width="1.5"/>
<line x1="1242.5" y1="48" x2="1242.5" y2="80" stroke="#151515" stroke-width="1.5"/>
<path d="M25.0,60.7 L21.2,64.5 L15.8,64.5 L12.0,60.7 L12.0,55.3 L15.8,51.5 L21.2,51.5 L25.0,55.3 Z" fill="none" stroke="#f0f0f0" stroke-width="1.3"/>
<path d="M22.0,59.5 L20.0,61.5 L17.0,61.5 L15.0,59.5 L15.0,56.5 L17.0,54.5 L20.0,54.5 L22.0,56.5 Z" fill="none" stroke="#f0f0f0" stroke-width="1.1"/>
<path d="M36.0,71.7 L32.2,75.5 L26.8,75.5 L23.0,71.7 L23.0,66.3 L26.8,62.5 L32.2,62.5 L36.0,66.3 Z" fill="none" stroke="#f0f0f0" stroke-width="1.3"/>
<path d="M33.0,70.5 L31.0,72.5 L28.0,72.5 L26.0,70.5 L26.0,67.5 L28.0,65.5 L31.0,65.5 L33.0,67.5 Z" fill="none" stroke="#f0f0f0" stroke-width="1.1"/>
<path d="M19,60 L28,69 M21,57.5 L30,66.5" fill="none" stroke="#f0f0f0" stroke-width="1.1"/>
<path d="M54.5,57 L50,52.5 C48,50.5 45,51 44,53 C43,55 43.5,57.5 45.5,59.5 L49.5,63.5" fill="none" stroke="#f0f0f0" stroke-width="3.2"/>
<path d="M54.5,57 L50,52.5 C48,50.5 45,51 44,53 C43,55 43.5,57.5 45.5,59.5 L49.5,63.5" fill="none" stroke="#444" stroke-width="1"/>
<path d="M56,64 L61,69 C63,71 63,73.5 61,74.5 C59,75.5 57,75 55,73 L52,70" fill="none" stroke="#f0f0f0" stroke-width="3.2"/>
<path d="M56,64 L61,69 C63,71 63,73.5 61,74.5 C59,75.5 57,75 55,73 L52,70" fill="none" stroke="#444" stroke-width="1"/>
<rect x="58" y="53" width="1.2" height="1.2" fill="#ddd"/>
<rect x="61" y="53" width="1.2" height="1.2" fill="#ddd"/>
<rect x="65" y="53" width="1.2" height="1.2" fill="#ddd"/>
<rect x="62" y="56" width="1.2" height="1.2" fill="#ddd"/>
<rect x="65" y="56" width="1.2" height="1.2" fill="#ddd"/>
<rect x="60" y="59" width="1.2" height="1.2" fill="#ddd"/>
<rect x="63" y="60" width="1.2" height="1.2" fill="#ddd"/>
<rect x="45" y="65" width="1.2" height="1.2" fill="#ddd"/>
<rect x="48" y="66" width="1.2" height="1.2" fill="#ddd"/>
<rect x="45" y="68" width="1.2" height="1.2" fill="#ddd"/>
<rect x="49" y="69" width="1.2" height="1.2" fill="#ddd"/>
<rect x="52" y="72" width="1.2" height="1.2" fill="#ddd"/>
<rect x="45" y="73" width="1.2" height="1.2" fill="#ddd"/>
<rect x="49" y="73" width="1.2" height="1.2" fill="#ddd"/>
<path d="M77,55 C80,51 84,51 87.5,56 C91,60 95,60 98,55" fill="none" stroke="#d8d8d8" stroke-width="1.3"/>
<path d="M77,60 C80,56 84,56 87.5,61 C91,65 95,65 98,60" fill="none" stroke="#d8d8d8" stroke-width="1.3"/>
<path d="M77,65 C80,61 84,61 87.5,66 C91,70 95,70 98,65" fill="none" stroke="#d8d8d8" stroke-width="1.3"/>
<rect x="85.5" y="69.5" width="7" height="5" fill="none" stroke="#ddd" stroke-width="1.2" rx="2"/>
<rect x="92.5" y="69.5" width="7" height="5" fill="none" stroke="#ddd" stroke-width="1.2" rx="2"/>
<line x1="107.5" y1="55" x2="107.5" y2="74" stroke="#1e1e1e" stroke-width="1.5"/>
<rect x="110" y="49" width="69" height="21" fill="#1a1a1a"/>
<rect x="112" y="51" width="66" height="18" fill="#555555"/>
<rect x="162" y="52" width="14" height="16" fill="#dcd8d0"/>
<line x1="162" y1="67.5" x2="176" y2="67.5" stroke="#8a8a8a" stroke-width="1"/>
<path d="M165,57 H173 L169,61 Z" fill="#000"/>
<text x="115" y="65" font-family="Liberation Sans" font-size="12" fill="#d8d8e8" text-anchor="start" font-weight="normal" font-style="normal" textLength="11" lengthAdjust="spacingAndGlyphs">All</text>
<path d="M185.5,53.5 L189,51.5 H202.5 V66 L199,68.5 H185.5 Z" fill="#555" stroke="#f0f0f0" stroke-width="1.3"/>
<path d="M196,61 V75 L199,72 L202,77 L204,76 L201,71 H205 Z" fill="#333" stroke="#f0f0f0" stroke-width="1.2"/>
<line x1="216" y1="53" x2="228" y2="53" stroke="#f0f0f0" stroke-width="1.2"/>
<line x1="216" y1="56" x2="228" y2="56" stroke="#f0f0f0" stroke-width="1.2"/>
<line x1="216" y1="59" x2="228" y2="59" stroke="#f0f0f0" stroke-width="1.2"/>
<line x1="216" y1="62" x2="228" y2="62" stroke="#f0f0f0" stroke-width="1.2"/>
<line x1="216" y1="65" x2="226" y2="65" stroke="#f0f0f0" stroke-width="1.2"/>
<path d="M230,60 V74 L233,71 L236,76 L238,75 L235,70 H239 Z" fill="#333" stroke="#f0f0f0" stroke-width="1.2"/>
<rect x="248.5" y="52.5" width="21" height="21" fill="none" stroke="#f0f0f0" stroke-width="1.3" stroke-dasharray="2.5,1.5"/>
<line x1="271" y1="77" x2="274" y2="74" stroke="#f0f0f0" stroke-width="1.5"/>
<rect x="280.5" y="52.5" width="17" height="18" fill="none" stroke="#f0f0f0" stroke-width="1.3" stroke-dasharray="2.5,1.5"/>
<path d="M291,59 L294,57 H302 V64 L299,66 H291 Z" fill="#666" stroke="#f0f0f0" stroke-width="1.2"/>
<line x1="311.5" y1="55" x2="311.5" y2="74" stroke="#1e1e1e" stroke-width="1.5"/>
<path d="M329.5,51 V76 M317,63.5 H342" fill="none" stroke="#f0f0f0" stroke-width="1.6"/>
<path d="M329.5,50 L326,55 H333 Z M329.5,77 L326,72 H333 Z M316,63.5 L321,60 V67 Z M343,63.5 L338,60 V67 Z" fill="#f0f0f0"/>
<rect x="327" y="61" width="5" height="5" fill="#444" stroke="#f0f0f0" stroke-width="1.2"/>
<circle cx="361" cy="64.5" r="10" fill="none" stroke="#f0f0f0" stroke-width="1.6" stroke-dasharray="53,10" transform="rotate(-60 361 64.5)"/>
<path d="M358,51 L364,54.5 L358,58 Z" fill="#f0f0f0"/>
<rect x="383.5" y="52.5" width="22" height="22" fill="#555" stroke="#d8d8d8" stroke-width="1.2"/>
<rect x="383.5" y="63.5" width="11" height="11" fill="#4a4a4a" stroke="#d8d8d8" stroke-width="1.2"/>
<path d="M395,62 L403,54 M398,54 H403 V59" fill="none" stroke="#f0f0f0" stroke-width="1.4"/>
<line x1="405" y1="77" x2="408" y2="74" stroke="#f0f0f0" stroke-width="1.5"/>
<rect x="410" y="49" width="69" height="21" fill="#1a1a1a"/>
<rect x="412" y="51" width="66" height="18" fill="#555555"/>
<rect x="462" y="52" width="14" height="16" fill="#dcd8d0"/>
<line x1="462" y1="67.5" x2="476" y2="67.5" stroke="#8a8a8a" stroke-width="1"/>
<path d="M465,57 H473 L469,61 Z" fill="#000"/>
<text x="415" y="65" font-family="Liberation Sans" font-size="12" fill="#d8d8e8" text-anchor="start" font-weight="normal" font-style="normal" textLength="22" lengthAdjust="spacingAndGlyphs">View</text>
<rect x="484.5" y="52.5" width="11" height="20" fill="#5e5e5e" stroke="#c8c8c8" stroke-width="1.2"/>
<rect x="497.5" y="52.5" width="10" height="11" fill="#4a4a4a" stroke="#c8c8c8" stroke-width="1.2"/>
<path d="M489.5,69 V76 M486,72.5 H493 M502,60 V66 M499,63 H505" fill="none" stroke="#ddd" stroke-width="1.2"/>
<line x1="507" y1="77" x2="510" y2="74" stroke="#f0f0f0" stroke-width="1.5"/>
<line x1="515.5" y1="55" x2="515.5" y2="74" stroke="#1e1e1e" stroke-width="1.5"/>
<path d="M533.5,56 V70 M526,63.5 H541" fill="none" stroke="#f0f0f0" stroke-width="1.4"/>
<circle cx="533.5" cy="53.5" r="2.5" fill="#444" stroke="#f0f0f0" stroke-width="1.3"/>
<circle cx="533.5" cy="73.5" r="2.5" fill="#444" stroke="#f0f0f0" stroke-width="1.3"/>
<circle cx="523.5" cy="63.5" r="2.5" fill="#444" stroke="#f0f0f0" stroke-width="1.3"/>
<circle cx="543.5" cy="63.5" r="2.5" fill="#444" stroke="#f0f0f0" stroke-width="1.3"/>
<rect x="550" y="49" width="31" height="31" fill="#1f1f1f"/>
<rect x="551" y="50" width="29" height="29" fill="#5a5a5a"/>
<rect x="555.5" y="53.5" width="22" height="20" fill="#3a3a3a" stroke="#f0f0f0" stroke-width="1.5" rx="3"/>
<rect x="557" y="68" width="19" height="4" fill="#b8b8b8"/>
<path d="M566.5,56 L561,62 H564 V65 H569 V62 H572 Z" fill="#f0f0f0"/>
<line x1="586.5" y1="55" x2="586.5" y2="74" stroke="#1e1e1e" stroke-width="1.5"/>
<text x="593.5" y="65.5" font-family="Liberation Sans" font-size="16" fill="#f0f0f0" text-anchor="start" font-weight="normal" font-style="normal" textLength="8.5" lengthAdjust="spacingAndGlyphs">3</text>
<path d="M605,76 V70 C605,66 613,66 613,70 V76 M607.5,76 V71 C607.5,69 610.5,69 610.5,71 V76" fill="none" stroke="#f0f0f0" stroke-width="1.1"/>
<line x1="614" y1="78" x2="617" y2="75" stroke="#f0f0f0" stroke-width="1.5"/>
<path d="M625,76 V70 C625,66 633,66 633,70 V76 M627.5,76 V71 C627.5,69 630.5,69 630.5,71 V76" fill="none" stroke="#f0f0f0" stroke-width="1.1"/>
<path d="M634,74 H648 M630,63 L637,52 M638,54 C642,58 644,64 643,72" fill="none" stroke="#f0f0f0" stroke-width="1.1"/>
<path d="M641,56 L638,53.5 L642,53 Z" fill="#f0f0f0"/>
<text x="656" y="64" font-family="Liberation Sans" font-size="12" fill="#f0f0f0" text-anchor="start" font-weight="normal" font-style="normal" textLength="13" lengthAdjust="spacingAndGlyphs">%</text>
<path d="M670,76 V70 C670,66 678,66 678,70 V76 M672.5,76 V71 C672.5,69 675.5,69 675.5,71 V76" fill="none" stroke="#f0f0f0" stroke-width="1.1"/>
<rect x="688.5" y="52.5" width="10" height="19" fill="#444" stroke="#f0f0f0" stroke-width="1.2"/>
<path d="M690.5,59 L693.5,55 L696.5,59 Z M690.5,65 L693.5,69 L696.5,65 Z" fill="#ccc"/>
<path d="M701,76 V70 C701,66 709,66 709,70 V76 M703.5,76 V71 C703.5,69 706.5,69 706.5,71 V76" fill="none" stroke="#f0f0f0" stroke-width="1.1"/>
<line x1="720.5" y1="55" x2="720.5" y2="74" stroke="#1e1e1e" stroke-width="1.5"/>
<text x="726" y="66" font-family="Liberation Sans" font-size="14" fill="#f0f0f0" text-anchor="start" font-weight="normal" font-style="normal" textLength="12" lengthAdjust="spacingAndGlyphs">{ }</text>
<path d="M738,66 L748,54 L751,57 L741,69 L737,70 Z" fill="#555" stroke="#f0f0f0" stroke-width="1.2"/>
<text x="727" y="76" font-family="Liberation Sans" font-size="6" fill="#f0f0f0" text-anchor="start" font-weight="bold" font-style="normal" textLength="16" lengthAdjust="spacingAndGlyphs">ABC</text>
<rect x="755" y="49" width="120" height="21" fill="#1a1a1a"/>
<rect x="757" y="51" width="117" height="18" fill="#555555"/>
<rect x="858" y="52" width="14" height="16" fill="#dcd8d0"/>
<line x1="858" y1="67.5" x2="872" y2="67.5" stroke="#8a8a8a" stroke-width="1"/>
<path d="M861,57 H869 L865,61 Z" fill="#000"/>
<text x="760" y="65" font-family="Liberation Sans" font-size="12" fill="#2a2a2a" text-anchor="start" font-weight="normal" font-style="normal" textLength="94" lengthAdjust="spacingAndGlyphs">Create Selection Se</text>
<line x1="877.5" y1="55" x2="877.5" y2="74" stroke="#1e1e1e" stroke-width="1.5"/>
<path d="M884.5,76 V53 L888,52 C891,53 891,58 890,63 L888,64 V76 Z" fill="#444" stroke="#ddd" stroke-width="1.2"/>
<line x1="895.5" y1="51" x2="895.5" y2="76" stroke="#f0f0f0" stroke-width="1.3"/>
<path d="M906.5,76 V53 L903,52 C900,53 900,58 901,63 L903,64 V76 Z" fill="#4a4a4a" stroke="#ddd" stroke-width="1.2"/>
<line x1="917" y1="52" x2="917" y2="76" stroke="#f0f0f0" stroke-width="1.3"/>
<rect x="919.5" y="55.5" width="11" height="7" fill="#555" stroke="#ddd" stroke-width="1.2"/>
<rect x="919.5" y="65.5" width="19" height="8" fill="#888" stroke="#ddd" stroke-width="1.2"/>
<line x1="939" y1="77" x2="942" y2="74" stroke="#f0f0f0" stroke-width="1.5"/>
<line x1="947.5" y1="55" x2="947.5" y2="74" stroke="#1e1e1e" stroke-width="1.5"/>
<path d="M955,57 L960,52 H973 L968,57 Z M955,62 L960,57 H973 L968,62 Z M955,67 L960,62 H973 L968,67 Z" fill="#555" stroke="#ddd" stroke-width="1"/>
<rect x="967.5" y="62.5" width="10" height="12" fill="#444" stroke="#ddd" stroke-width="1.2"/>
<rect x="969.5" y="64.5" width="3" height="3" fill="#ccc"/>
<rect x="973.5" y="64.5" width="2" height="3" fill="#aaa"/>
<line x1="986.5" y1="55" x2="986.5" y2="74" stroke="#1e1e1e" stroke-width="1.5"/>
<rect x="988" y="49" width="31" height="31" fill="#161616"/>
<rect x="989" y="50" width="29" height="29" fill="#1f2d3b"/>
<rect x="993.5" y="56.5" width="22" height="15" fill="#5a5248" stroke="#bdb5aa" stroke-width="1.2"/>
<rect x="996" y="54" width="8" height="3" fill="#5a5248" stroke="#bdb5aa" stroke-width="1"/>
<circle cx="1013" cy="70" r="3.5" fill="#444" stroke="#aaa" stroke-width="1"/>
<rect x="1012" y="72" width="2" height="5" fill="#aaa"/>
<rect x="1024.5" y="52.5" width="24" height="23" fill="#444" stroke="#f0f0f0" stroke-width="1.3"/>
<line x1="1028" y1="56" x2="1028" y2="73" stroke="#ccc" stroke-width="1"/>
<path d="M1031,67 C1034,55 1037,55 1040,63 C1042,70 1045,70 1047,62" fill="none" stroke="#f0f0f0" stroke-width="1.2"/>
<line x1="1030" y1="66" x2="1048" y2="66" stroke="#999" stroke-width="1"/>
<rect x="1056.5" y="52.5" width="23" height="23" fill="#444" stroke="#f0f0f0" stroke-width="1.3"/>
<rect x="1059.5" y="55.5" width="17" height="5" fill="#555" stroke="#ddd" stroke-width="1.2"/>
<rect x="1059.5" y="67.5" width="17" height="5" fill="#999" stroke="#ddd" stroke-width="1.2"/>
<path d="M1068,61 V65 M1065,63 L1068,66 L1071,63" fill="none" stroke="#f0f0f0" stroke-width="1.2"/>
<line x1="1087.5" y1="55" x2="1087.5" y2="74" stroke="#1e1e1e" stroke-width="1.5"/>
<circle cx="1104" cy="63" r="11" fill="#666" stroke="#aaa" stroke-width="1"/>
<rect x="1095.0" y="54.0" width="4.5" height="4.5" fill="#bdbdbd"/>
<rect x="1095.0" y="63.0" width="4.5" height="4.5" fill="#bdbdbd"/>
<rect x="1099.5" y="58.5" width="4.5" height="4.5" fill="#bdbdbd"/>
<rect x="1099.5" y="67.5" width="4.5" height="4.5" fill="#bdbdbd"/>
<rect x="1104.0" y="54.0" width="4.5" height="4.5" fill="#bdbdbd"/>
<rect x="1104.0" y="63.0" width="4.5" height="4.5" fill="#bdbdbd"/>
<rect x="1108.5" y="58.5" width="4.5" height="4.5" fill="#bdbdbd"/>
<rect x="1108.5" y="67.5" width="4.5" height="4.5" fill="#bdbdbd"/>
<rect x="1106.5" y="63.5" width="11" height="12" fill="#444" stroke="#ddd" stroke-width="1.2"/>
<rect x="1108.5" y="65.5" width="3" height="3" fill="#ccc"/>
<rect x="1112.5" y="65.5" width="2" height="3" fill="#aaa"/>
<line x1="1118" y1="77" x2="1121" y2="74" stroke="#f0f0f0" stroke-width="1.5"/>
<line x1="1126.5" y1="55" x2="1126.5" y2="74" stroke="#1e1e1e" stroke-width="1.5"/>
<path d="M1134.6,57.3 C1133.7,63.6 1136.4,66.3 1140,66.3 C1143.6,66.3 1146.3,63.6 1145.4,57.3 Z" fill="#5a5a5a" stroke="#e8e8e8" stroke-width="1.2"/>
<path d="M1134.6,59.1 L1129.2,55.5 C1130.1,59.1 1131.9,62.7 1135.5,63.6" fill="none" stroke="#e8e8e8" stroke-width="1.2"/>
<path d="M1145.4,58.2 C1149.9,56.4 1150.8,60 1144.5,64.5" fill="none" stroke="#e8e8e8" stroke-width="1.2"/>
<path d="M1136.4,57.3 C1137.3,54.6 1142.7,54.6 1143.6,57.3" fill="#5a5a5a" stroke="#e8e8e8" stroke-width="1"/>
<rect x="1139.1" y="52.8" width="1.8" height="2.25" fill="#e8e8e8"/>
<rect x="1143.5" y="62.5" width="11" height="12" fill="#444" stroke="#ddd" stroke-width="1.2"/>
<rect x="1145.5" y="64.5" width="3" height="3" fill="#ccc"/>
<rect x="1149.5" y="64.5" width="2" height="3" fill="#aaa"/>
<rect x="1164.5" y="52.5" width="23" height="23" fill="#444" stroke="#f0f0f0" stroke-width="1.3"/>
<rect x="1165" y="53" width="22" height="3" fill="#ddd"/>
<path d="M1170.9,62.45 C1170.05,68.4 1172.6,70.95 1176,70.95 C1179.4,70.95 1181.95,68.4 1181.1,62.45 Z" fill="#5a5a5a" stroke="#e8e8e8" stroke-width="1.2"/>
<path d="M1170.9,64.15 L1165.8,60.75 C1166.65,64.15 1168.35,67.55 1171.75,68.4" fill="none" stroke="#e8e8e8" stroke-width="1.2"/>
<path d="M1181.1,63.3 C1185.35,61.6 1186.2,65 1180.25,69.25" fill="none" stroke="#e8e8e8" stroke-width="1.2"/>
<path d="M1172.6,62.45 C1173.45,59.9 1178.55,59.9 1179.4,62.45" fill="#5a5a5a" stroke="#e8e8e8" stroke-width="1"/>
<rect x="1175.15" y="58.2" width="1.7" height="2.125" fill="#e8e8e8"/>
<path d="M1202.3,60.15 C1201.35,66.8 1204.2,69.65 1208,69.65 C1211.8,69.65 1214.65,66.8 1213.7,60.15 Z" fill="#5a5a5a" stroke="#e8e8e8" stroke-width="1.2"/>
<path d="M1202.3,62.05 L1196.6,58.25 C1197.55,62.05 1199.45,65.85 1203.25,66.8" fill="none" stroke="#e8e8e8" stroke-width="1.2"/>
<path d="M1213.7,61.1 C1218.45,59.2 1219.4,63 1212.75,67.75" fill="none" stroke="#e8e8e8" stroke-width="1.2"/>
<path d="M1204.2,60.15 C1205.15,57.3 1210.85,57.3 1211.8,60.15" fill="#5a5a5a" stroke="#e8e8e8" stroke-width="1"/>
<rect x="1207.05" y="55.4" width="1.9" height="2.375" fill="#e8e8e8"/>
<line x1="1216" y1="77" x2="1219" y2="74" stroke="#f0f0f0" stroke-width="1.5"/>
<rect x="1248" y="53" width="22" height="22" fill="#e0e0e0"/>
<text x="1249" y="70" font-family="Liberation Sans" font-size="12" fill="#a8a8a8" text-anchor="start" font-weight="bold" font-style="normal" textLength="20" lengthAdjust="spacingAndGlyphs">BLZ</text>
<path d="M1262,60 L1269,66 L1262,72 Z" fill="#999"/>
<rect x="1279" y="52" width="24" height="24" fill="#f0f0f0"/>
<rect x="1280" y="53.5" width="1.6" height="1.6" fill="#555"/>
<rect x="1280" y="72.5" width="1.6" height="1.6" fill="#555"/>
<rect x="1283" y="53.5" width="1.6" height="1.6" fill="#555"/>
<rect x="1283" y="72.5" width="1.6" height="1.6" fill="#555"/>
<rect x="1286" y="53.5" width="1.6" height="1.6" fill="#555"/>
<rect x="1286" y="72.5" width="1.6" height="1.6" fill="#555"/>
<rect x="1289" y="53.5" width="1.6" height="1.6" fill="#555"/>
<rect x="1289" y="72.5" width="1.6" height="1.6" fill="#555"/>
<rect x="1292" y="53.5" width="1.6" height="1.6" fill="#555"/>
<rect x="1292" y="72.5" width="1.6" height="1.6" fill="#555"/>
<rect x="1295" y="53.5" width="1.6" height="1.6" fill="#555"/>
<rect x="1295" y="72.5" width="1.6" height="1.6" fill="#555"/>
<rect x="1298" y="53.5" width="1.6" height="1.6" fill="#555"/>
<rect x="1298" y="72.5" width="1.6" height="1.6" fill="#555"/>
<rect x="1301" y="53.5" width="1.6" height="1.6" fill="#555"/>
<rect x="1301" y="72.5" width="1.6" height="1.6" fill="#555"/>
<text x="1281" y="70" font-family="Liberation Sans" font-size="12" fill="#a8a8a8" text-anchor="start" font-weight="bold" font-style="normal" textLength="20" lengthAdjust="spacingAndGlyphs">BLZ</text>
<circle cx="1297" cy="68" r="4" fill="#555"/>
<line x1="3.5" y1="87" x2="3.5" y2="122" stroke="#151515" stroke-width="1.5"/>
<line x1="6.5" y1="87" x2="6.5" y2="122" stroke="#151515" stroke-width="1.5"/>
<defs><linearGradient id="gtab" x1="0" y1="0" x2="0" y2="1"><stop offset="0" stop-color="#cfcfcf"/><stop offset="1" stop-color="#f6f6f6"/></linearGradient></defs>
<rect x="14" y="87" width="163" height="18" fill="#fff"/>
<rect x="15" y="88" width="161" height="17" fill="url(#gtab)"/>
<text x="37" y="98.5" font-family="Liberation Sans" font-size="11" fill="#2a2a2a" text-anchor="start" font-weight="normal" font-style="normal" textLength="117" lengthAdjust="spacingAndGlyphs">Graphite Modeling Tools</text>
<text x="201.5" y="97.5" font-family="Liberation Sans" font-size="11" fill="#fafafa" text-anchor="start" font-weight="normal" font-style="normal" textLength="44" lengthAdjust="spacingAndGlyphs">Freeform</text>
<text x="292.5" y="97.5" font-family="Liberation Sans" font-size="11" fill="#fafafa" text-anchor="start" font-weight="normal" font-style="normal" textLength="44" lengthAdjust="spacingAndGlyphs">Selection</text>
<text x="384.5" y="97.5" font-family="Liberation Sans" font-size="11" fill="#fafafa" text-anchor="start" font-weight="normal" font-style="normal" textLength="60" lengthAdjust="spacingAndGlyphs">Object Paint</text>
<rect x="489" y="91" width="12" height="6.5" fill="#eee" rx="2"/>
<path d="M492,93 H498 L495,96 Z" fill="#444"/>
<path d="M508,93 H513 L510.5,95.5 Z" fill="#ddd"/>
<defs><linearGradient id="rpan" x1="0" y1="0" x2="0" y2="1"><stop offset="0" stop-color="#dadada"/><stop offset="0.5" stop-color="#bdbdbd"/><stop offset="1" stop-color="#959595"/></linearGradient></defs>
<rect x="10" y="104" width="1908" height="20" fill="#fff"/>
<rect x="11" y="105" width="1907" height="18" fill="url(#rpan)"/>
<rect x="1918" y="104" width="2" height="20" fill="#3a3a3a"/>
<rect x="12" y="105" width="96" height="18" fill="#efefef"/>
<line x1="12.5" y1="106" x2="12.5" y2="122" stroke="#bdbdbd" stroke-width="1"/>
<rect x="108" y="105" width="1.5" height="18" fill="#fff"/>
<text x="17.5" y="117" font-family="Liberation Sans" font-size="11" fill="#333" text-anchor="start" font-weight="normal" font-style="normal" textLength="85" lengthAdjust="spacingAndGlyphs">Polygon Modeling</text>
<text x="6" y="141" font-family="Liberation Sans" font-size="11" fill="#dcdcdc" text-anchor="start" font-weight="normal" font-style="normal" textLength="200" lengthAdjust="spacingAndGlyphs">[ + ] [ Perspective ] [ Smooth + Highlights ]</text>
<text x="27.5" y="902" font-family="Liberation Sans" font-size="8" fill="#0000e0" text-anchor="start" font-weight="normal" font-style="normal" textLength="5" lengthAdjust="spacingAndGlyphs">z</text>
<line x1="27.5" y1="907" x2="27.5" y2="931" stroke="#0000d8" stroke-width="1"/>
<line x1="28" y1="930.5" x2="49" y2="922" stroke="#00b000" stroke-width="1"/>
<line x1="29" y1="931.5" x2="41.5" y2="934.5" stroke="#e00000" stroke-width="1"/>
<path d="M44,925 L47,929 M47,925 L44,929" fill="none" stroke="#e00000" stroke-width="0.9"/>
<path d="M48,916 V919 L50,921 M52,916 V919 L50,921 V923 L48.5,924" fill="none" stroke="#00b000" stroke-width="0.9"/>
<ellipse cx="1680.5" cy="199.5" rx="34.5" ry="10.5" fill="none" stroke="#8c9096" stroke-width="4"/>
<ellipse cx="1680.5" cy="199.5" rx="29" ry="7.5" fill="none" stroke="#6f7378" stroke-width="1"/>
<ellipse cx="1680.5" cy="201" rx="27" ry="6" fill="#303030"/>
<path d="M1661,167 L1667,164 L1700,166 L1700,196 L1680,202 L1662,194 Z" fill="#8e9196"/>
<path d="M1661,167 L1667,164 L1700,166 L1680,171 Z" fill="#989ba0"/>
<line x1="1680.5" y1="171" x2="1680.5" y2="202" stroke="#7a8090" stroke-width="0.8"/>
<text x="1683" y="187" font-family="Liberation Sans" font-size="7" fill="#4a4e58" text-anchor="start" font-weight="bold" font-style="normal" textLength="15" lengthAdjust="spacingAndGlyphs">RIGHT</text>
<text x="1664" y="185" font-family="Liberation Sans" font-size="6" fill="#5a5e68" text-anchor="start" font-weight="normal" font-style="normal" textLength="11" lengthAdjust="spacingAndGlyphs">FRT</text>
<line x1="1736" y1="124.5" x2="1920" y2="124.5" stroke="#cfcfcf" stroke-width="1"/>
<rect x="1739" y="128" width="27" height="24" fill="#4b4b4b"/>
<line x1="1766.5" y1="128" x2="1766.5" y2="152" stroke="#262626" stroke-width="1.5"/>
<line x1="1795.5" y1="128" x2="1795.5" y2="152" stroke="#262626" stroke-width="1.5"/>
<line x1="1824.5" y1="128" x2="1824.5" y2="152" stroke="#262626" stroke-width="1.5"/>
<line x1="1853.5" y1="128" x2="1853.5" y2="152" stroke="#262626" stroke-width="1.5"/>
<line x1="1882.5" y1="128" x2="1882.5" y2="152" stroke="#262626" stroke-width="1.5"/>
<line x1="1911.5" y1="128" x2="1911.5" y2="152" stroke="#262626" stroke-width="1.5"/>
<line x1="1739" y1="152.5" x2="1920" y2="152.5" stroke="#3e3e3e" stroke-width="1"/>
<line x1="1752.5" y1="140" x2="1752.5" y2="132" stroke="#b8b8b8" stroke-width="2" transform="rotate(0 1752.5 140)"/>
<line x1="1752.5" y1="140" x2="1752.5" y2="132" stroke="#b8b8b8" stroke-width="2" transform="rotate(30 1752.5 140)"/>
<line x1="1752.5" y1="140" x2="1752.5" y2="132" stroke="#b8b8b8" stroke-width="2" transform="rotate(60 1752.5 140)"/>
<line x1="1752.5" y1="140" x2="1752.5" y2="132" stroke="#b8b8b8" stroke-width="2" transform="rotate(90 1752.5 140)"/>
<line x1="1752.5" y1="140" x2="1752.5" y2="132" stroke="#b8b8b8" stroke-width="2" transform="rotate(120 1752.5 140)"/>
<line x1="1752.5" y1="140" x2="1752.5" y2="132" stroke="#b8b8b8" stroke-width="2" transform="rotate(150 1752.5 140)"/>
<line x1="1752.5" y1="140" x2="1752.5" y2="132" stroke="#b8b8b8" stroke-width="2" transform="rotate(180 1752.5 140)"/>
<line x1="1752.5" y1="140" x2="1752.5" y2="132" stroke="#b8b8b8" stroke-width="2" transform="rotate(210 1752.5 140)"/>
<line x1="1752.5" y1="140" x2="1752.5" y2="132" stroke="#b8b8b8" stroke-width="2" transform="rotate(240 1752.5 140)"/>
<line x1="1752.5" y1="140" x2="1752.5" y2="132" stroke="#b8b8b8" stroke-width="2" transform="rotate(270 1752.5 140)"/>
<line x1="1752.5" y1="140" x2="1752.5" y2="132" stroke="#b8b8b8" stroke-width="2" transform="rotate(300 1752.5 140)"/>
<line x1="1752.5" y1="140" x2="1752.5" y2="132" stroke="#b8b8b8" stroke-width="2" transform="rotate(330 1752.5 140)"/>
<circle cx="1752.5" cy="140" r="5" fill="#a8a8a8"/><circle cx="1752.5" cy="140" r="1.3" fill="#555"/>
<path d="M1773.5,131.5 H1790 V148 H1773.5 Z" fill="none" stroke="#bbb" stroke-width="1.1"/>
<path d="M1775,148 C1775,138 1780,133 1789,132 M1779,148 C1779,141 1782,137 1789,136 M1783,148 C1783,143 1785,141 1789,140" fill="none" stroke="#c8c8c8" stroke-width="1.3"/>
<circle cx="1773.5" cy="131.5" r="1.5" fill="#444" stroke="#ddd" stroke-width="1"/><circle cx="1790" cy="148" r="1.5" fill="#444" stroke="#ddd" stroke-width="1"/>
<rect x="1806.5" y="130.5" width="10" height="9" fill="#555" stroke="#ddd" stroke-width="1.1"/>
<path d="M1811.5,139.5 V142 M1802,146 L1811.5,142 L1821,146 M1811.5,142 V146" fill="none" stroke="#ccc" stroke-width="1"/>
<rect x="1800.5" y="145.5" width="5" height="5" fill="#444" stroke="#ddd" stroke-width="1.1"/>
<rect x="1809.0" y="145.5" width="5" height="5" fill="#444" stroke="#ddd" stroke-width="1.1"/>
<rect x="1817.5" y="145.5" width="5" height="5" fill="#444" stroke="#ddd" stroke-width="1.1"/>
<circle cx="1842" cy="140" r="7.5" fill="none" stroke="#c8c8c8" stroke-width="1.5"/>
<circle cx="1842" cy="140" r="4.5" fill="none" stroke="#c8c8c8" stroke-width="1.5"/>
<circle cx="1842" cy="140" r="1.5" fill="none" stroke="#c8c8c8" stroke-width="1.5"/>
<path d="M1833,134 C1831,138 1831,142 1833,146 M1830,133 C1828,138 1828,142 1830,147" fill="none" stroke="#999" stroke-width="1"/>
<rect x="1859.5" y="131.5" width="17" height="13" fill="#444" stroke="#ccc" stroke-width="1.3"/>
<rect x="1865" y="134.5" width="7" height="7" fill="#555" stroke="#ccc" stroke-width="1.1"/>
<line x1="1864" y1="148" x2="1872" y2="148" stroke="#ccc" stroke-width="1.5"/>
<line x1="1868" y1="145" x2="1868" y2="148" stroke="#ccc" stroke-width="1"/>
<line x1="1889" y1="150" x2="1900" y2="135" stroke="#c8c8c8" stroke-width="3"/>
<path d="M1894,133 L1900,129 L1908,135 L1906,138 L1901,135 L1899,139 Z" fill="#c8c8c8"/>
<rect x="1748" y="161" width="24" height="23" fill="#1c1c1c"/>
<rect x="1749" y="162" width="22" height="21" fill="#5a5a5a"/>
<circle cx="1760.5" cy="173" r="8" fill="#5e5e5e" stroke="#e8e8e8" stroke-width="1.2"/>
<circle cx="1782" cy="170.5" r="5.5" fill="#555" stroke="#eee" stroke-width="1"/>
<rect x="1782.5" y="171.5" width="8" height="8" fill="#555" stroke="#eee" stroke-width="1"/>
<path d="M1801,171 L1813,166 L1815,177 Z" fill="#666" stroke="#ddd" stroke-width="1"/>
<path d="M1811,166 L1815,163 L1816,168" fill="none" stroke="#ddd" stroke-width="1"/>
<rect x="1824.5" y="165.5" width="12" height="6" fill="#444" stroke="#eee" stroke-width="1" rx="2"/>
<rect x="1825.5" y="173.5" width="10" height="6" fill="#444" stroke="#eee" stroke-width="1"/>
<path d="M1836,174 L1840,172 V179 L1836,177 Z" fill="#ddd"/>
<rect x="1848.5" y="167" width="12" height="10" fill="#444" stroke="#eee" stroke-width="1.1" rx="2"/>
<circle cx="1853.5" cy="172" r="2.5" fill="#666" stroke="#eee" stroke-width="0.9"/>
<line x1="1857" y1="178" x2="1864" y2="178" stroke="#eee" stroke-width="1"/>
<path d="M1872,168 C1874,166 1876,166 1878,168 C1880,170 1882,170 1884,168" fill="none" stroke="#eee" stroke-width="1.2"/>
<path d="M1872,172.5 C1874,170.5 1876,170.5 1878,172.5 C1880,174.5 1882,174.5 1884,172.5" fill="none" stroke="#eee" stroke-width="1.2"/>
<path d="M1872,177 C1874,175 1876,175 1878,177 C1880,179 1882,179 1884,177" fill="none" stroke="#eee" stroke-width="1.2"/>
<circle cx="1900" cy="169" r="3.5" fill="#ccc"/><circle cx="1906" cy="176" r="3.5" fill="#ccc"/>
<line x1="1900" y1="169" x2="1900" y2="164" stroke="#bbb" stroke-width="1.2" transform="rotate(0 1900 169)"/>
<line x1="1906" y1="176" x2="1906" y2="171" stroke="#bbb" stroke-width="1.2" transform="rotate(0 1906 176)"/>
<line x1="1900" y1="169" x2="1900" y2="164" stroke="#bbb" stroke-width="1.2" transform="rotate(45 1900 169)"/>
<line x1="1906" y1="176" x2="1906" y2="171" stroke="#bbb" stroke-width="1.2" transform="rotate(45 1906 176)"/>
<line x1="1900" y1="169" x2="1900" y2="164" stroke="#bbb" stroke-width="1.2" transform="rotate(90 1900 169)"/>
<line x1="1906" y1="176" x2="1906" y2="171" stroke="#bbb" stroke-width="1.2" transform="rotate(90 1906 176)"/>
<line x1="1900" y1="169" x2="1900" y2="164" stroke="#bbb" stroke-width="1.2" transform="rotate(135 1900 169)"/>
<line x1="1906" y1="176" x2="1906" y2="171" stroke="#bbb" stroke-width="1.2" transform="rotate(135 1906 176)"/>
<line x1="1900" y1="169" x2="1900" y2="164" stroke="#bbb" stroke-width="1.2" transform="rotate(180 1900 169)"/>
<line x1="1906" y1="176" x2="1906" y2="171" stroke="#bbb" stroke-width="1.2" transform="rotate(180 1906 176)"/>
<line x1="1900" y1="169" x2="1900" y2="164" stroke="#bbb" stroke-width="1.2" transform="rotate(225 1900 169)"/>
<line x1="1906" y1="176" x2="1906" y2="171" stroke="#bbb" stroke-width="1.2" transform="rotate(225 1906 176)"/>
<line x1="1900" y1="169" x2="1900" y2="164" stroke="#bbb" stroke-width="1.2" transform="rotate(270 1900 169)"/>
<line x1="1906" y1="176" x2="1906" y2="171" stroke="#bbb" stroke-width="1.2" transform="rotate(270 1906 176)"/>
<line x1="1900" y1="169" x2="1900" y2="164" stroke="#bbb" stroke-width="1.2" transform="rotate(315 1900 169)"/>
<line x1="1906" y1="176" x2="1906" y2="171" stroke="#bbb" stroke-width="1.2" transform="rotate(315 1906 176)"/>
<rect x="1748" y="190" width="164" height="21" fill="#111"/>
<rect x="1750" y="192" width="161" height="18" fill="#555555"/>
<rect x="1894" y="192" width="16" height="17" fill="#dcd8d0"/>
<path d="M1898,199 H1906 L1902,203 Z" fill="#000"/>
<text x="1751" y="205" font-family="Liberation Sans" font-size="11" fill="#e6e2d8" text-anchor="start" font-weight="normal" font-style="normal" textLength="93" lengthAdjust="spacingAndGlyphs">Standard Primitives</text>
<line x1="1740.5" y1="218" x2="1740.5" y2="997" stroke="#0c0c0c" stroke-width="1.5"/>
<line x1="1740" y1="218.5" x2="1914" y2="218.5" stroke="#0c0c0c" stroke-width="1.5"/>
<line x1="1913.5" y1="219" x2="1913.5" y2="997" stroke="#3a3a3a" stroke-width="1"/>
<line x1="1741" y1="996.5" x2="1914" y2="996.5" stroke="#3a3a3a" stroke-width="1"/>
<line x1="1746.5" y1="230" x2="1746.5" y2="364" stroke="#111" stroke-width="1.2"/>
<line x1="1746" y1="364.5" x2="1910" y2="364.5" stroke="#111" stroke-width="1.2"/>
<line x1="1909.5" y1="232" x2="1909.5" y2="364" stroke="#111" stroke-width="1.2"/>
<rect x="1749.5" y="223.5" width="157" height="15" fill="#3e3e3e" stroke="#6c6c6c" stroke-width="1"/>
<text x="1753" y="234.5" font-family="Liberation Sans" font-size="11" fill="#f0f0f0" text-anchor="start" font-weight="normal" font-style="normal">-</text>
<text x="1827.5" y="235" font-family="Liberation Sans" font-size="11" fill="#f0f0f0" text-anchor="middle" font-weight="normal" font-style="normal" textLength="59" lengthAdjust="spacingAndGlyphs">Object Type</text>
<rect x="1780.5" y="242.5" width="12" height="12" fill="#464646" stroke="#2a2a2a" stroke-width="1"/>
<path d="M1781.5,254 V243.5 H1792" fill="none" stroke="#0a0a0a" stroke-width="1.5"/>
<text x="1803" y="253" font-family="Liberation Sans" font-size="11" fill="#141414" text-anchor="start" font-weight="normal" font-style="normal" textLength="41" lengthAdjust="spacingAndGlyphs">AutoGrid</text>
<rect x="1755.5" y="259" width="68" height="17" fill="#454545"/>
<path d="M1755.5,276 V259 H1823.5" fill="none" stroke="#5a5a5a" stroke-width="1"/>
<path d="M1756.0,276 H1823.5 V259" fill="none" stroke="#111" stroke-width="1.6"/>
<text x="1789.5" y="271.5" font-family="Liberation Sans" font-size="11" fill="#e8e6dc" text-anchor="middle" font-weight="normal" font-style="normal">Box</text>
<rect x="1833.5" y="259" width="68" height="17" fill="#454545"/>
<path d="M1833.5,276 V259 H1901.5" fill="none" stroke="#5a5a5a" stroke-width="1"/>
<path d="M1834.0,276 H1901.5 V259" fill="none" stroke="#111" stroke-width="1.6"/>
<text x="1867.5" y="271.5" font-family="Liberation Sans" font-size="11" fill="#e8e6dc" text-anchor="middle" font-weight="normal" font-style="normal">Cone</text>
<rect x="1755.5" y="280" width="68" height="17" fill="#454545"/>
<path d="M1755.5,297 V280 H1823.5" fill="none" stroke="#5a5a5a" stroke-width="1"/>
<path d="M1756.0,297 H1823.5 V280" fill="none" stroke="#111" stroke-width="1.6"/>
<text x="1789.5" y="292.5" font-family="Liberation Sans" font-size="11" fill="#e8e6dc" text-anchor="middle" font-weight="normal" font-style="normal">Sphere</text>
<rect x="1833.5" y="280" width="68" height="17" fill="#454545"/>
<path d="M1833.5,297 V280 H1901.5" fill="none" stroke="#5a5a5a" stroke-width="1"/>
<path d="M1834.0,297 H1901.5 V280" fill="none" stroke="#111" stroke-width="1.6"/>
<text x="1867.5" y="292.5" font-family="Liberation Sans" font-size="11" fill="#e8e6dc" text-anchor="middle" font-weight="normal" font-style="normal">GeoSphere</text>
<rect x="1755.5" y="301" width="68" height="17" fill="#454545"/>
<path d="M1755.5,318 V301 H1823.5" fill="none" stroke="#5a5a5a" stroke-width="1"/>
<path d="M1756.0,318 H1823.5 V301" fill="none" stroke="#111" stroke-width="1.6"/>
<text x="1789.5" y="313.5" font-family="Liberation Sans" font-size="11" fill="#e8e6dc" text-anchor="middle" font-weight="normal" font-style="normal">Cylinder</text>
<rect x="1833.5" y="301" width="68" height="17" fill="#454545"/>
<path d="M1833.5,318 V301 H1901.5" fill="none" stroke="#5a5a5a" stroke-width="1"/>
<path d="M1834.0,318 H1901.5 V301" fill="none" stroke="#111" stroke-width="1.6"/>
<text x="1867.5" y="313.5" font-family="Liberation Sans" font-size="11" fill="#e8e6dc" text-anchor="middle" font-weight="normal" font-style="normal">Tube</text>
<rect x="1755.5" y="322" width="68" height="17" fill="#454545"/>
<path d="M1755.5,339 V322 H1823.5" fill="none" stroke="#5a5a5a" stroke-width="1"/>
<path d="M1756.0,339 H1823.5 V322" fill="none" stroke="#111" stroke-width="1.6"/>
<text x="1789.5" y="334.5" font-family="Liberation Sans" font-size="11" fill="#e8e6dc" text-anchor="middle" font-weight="normal" font-style="normal">Torus</text>
<rect x="1833.5" y="322" width="68" height="17" fill="#454545"/>
<path d="M1833.5,339 V322 H1901.5" fill="none" stroke="#5a5a5a" stroke-width="1"/>
<path d="M1834.0,339 H1901.5 V322" fill="none" stroke="#111" stroke-width="1.6"/>
<text x="1867.5" y="334.5" font-family="Liberation Sans" font-size="11" fill="#e8e6dc" text-anchor="middle" font-weight="normal" font-style="normal">Pyramid</text>
<rect x="1755.5" y="343" width="68" height="17" fill="#454545"/>
<path d="M1755.5,360 V343 H1823.5" fill="none" stroke="#5a5a5a" stroke-width="1"/>
<path d="M1756.0,360 H1823.5 V343" fill="none" stroke="#111" stroke-width="1.6"/>
<text x="1789.5" y="355.5" font-family="Liberation Sans" font-size="11" fill="#e8e6dc" text-anchor="middle" font-weight="normal" font-style="normal">Teapot</text>
<rect x="1833.5" y="343" width="68" height="17" fill="#454545"/>
<path d="M1833.5,360 V343 H1901.5" fill="none" stroke="#5a5a5a" stroke-width="1"/>
<path d="M1834.0,360 H1901.5 V343" fill="none" stroke="#111" stroke-width="1.6"/>
<text x="1867.5" y="355.5" font-family="Liberation Sans" font-size="11" fill="#e8e6dc" text-anchor="middle" font-weight="normal" font-style="normal">Plane</text>
<line x1="1746.5" y1="379" x2="1746.5" y2="422" stroke="#111" stroke-width="1.2"/>
<line x1="1746" y1="422.5" x2="1910" y2="422.5" stroke="#111" stroke-width="1.2"/>
<line x1="1909.5" y1="380" x2="1909.5" y2="422" stroke="#111" stroke-width="1.2"/>
<rect x="1749.5" y="372.5" width="157" height="15" fill="#3e3e3e" stroke="#6c6c6c" stroke-width="1"/>
<text x="1753" y="383.5" font-family="Liberation Sans" font-size="11" fill="#f0f0f0" text-anchor="start" font-weight="normal" font-style="normal">-</text>
<text x="1827.5" y="384" font-family="Liberation Sans" font-size="11" fill="#f0f0f0" text-anchor="middle" font-weight="normal" font-style="normal" textLength="76" lengthAdjust="spacingAndGlyphs">Name and Color</text>
<rect x="1753" y="395" width="132" height="19" fill="#0e0e0e"/>
<rect x="1755" y="397" width="129" height="17" fill="#585858"/>
<rect x="1888" y="395.5" width="16" height="18.5" fill="#8b0836"/>
<rect x="0" y="957" width="1736" height="19" fill="#464646"/>
<rect x="0.5" y="957.5" width="15" height="16" fill="#474747" stroke="#303030" stroke-width="1"/>
<text x="4" y="970" font-family="Liberation Sans" font-size="11" fill="#ddd" text-anchor="start" font-weight="normal" font-style="normal">&lt;</text>
<rect x="17" y="958" width="124" height="16" fill="#0c0c0c"/>
<rect x="17" y="958" width="122" height="14.5" fill="#474747"/>
<path d="M17.5,972 V958.5 H139" fill="none" stroke="#5a5a5a" stroke-width="1"/>
<text x="78.5" y="970" font-family="Liberation Sans" font-size="11" fill="#e0e0e0" text-anchor="middle" font-weight="normal" font-style="normal" textLength="34" lengthAdjust="spacingAndGlyphs">0 / 100</text>
<rect x="141.5" y="957.5" width="15" height="16" fill="#474747" stroke="#303030" stroke-width="1"/>
<text x="145" y="970" font-family="Liberation Sans" font-size="11" fill="#ddd" text-anchor="start" font-weight="normal" font-style="normal">&gt;</text>
<rect x="0" y="976" width="50" height="26" fill="#474747"/>
<line x1="0" y1="976.5" x2="1736" y2="976.5" stroke="#0c0c0c" stroke-width="1"/>
<rect x="50" y="977" width="1636" height="25" fill="#2d2d2d"/>
<rect x="1686" y="977" width="50" height="25" fill="#474747"/>
<rect x="13.5" y="981.5" width="16" height="5" fill="none" stroke="#f0f0f0" stroke-width="1.3"/>
<path d="M16,984 C18,982 20,986 22,984 C24,982 26,986 28,984" fill="none" stroke="#f0f0f0" stroke-width="0.8"/>
<rect x="13.5" y="994.5" width="16" height="3" fill="none" stroke="#f0f0f0" stroke-width="1.2"/>
<path d="M16.5,993 V989 M15,990.5 L16.5,989 L18,990.5 M26.5,988 V992 M25,990.5 L26.5,992 L28,990.5" fill="none" stroke="#f0f0f0" stroke-width="1"/>
<rect x="54" y="978" width="7.5" height="24" fill="#7d7420"/>
<line x1="57.5" y1="977" x2="57.5" y2="988" stroke="#9a9a9a" stroke-width="1"/>
<line x1="57.5" y1="999" x2="57.5" y2="1002" stroke="#9a9a9a" stroke-width="1"/>
<line x1="73.5" y1="977" x2="73.5" y2="988" stroke="#9a9a9a" stroke-width="1"/>
<line x1="90.5" y1="977" x2="90.5" y2="988" stroke="#9a9a9a" stroke-width="1"/>
<line x1="106.5" y1="977" x2="106.5" y2="988" stroke="#9a9a9a" stroke-width="1"/>
<line x1="122.5" y1="977" x2="122.5" y2="988" stroke="#9a9a9a" stroke-width="1"/>
<line x1="138.5" y1="977" x2="138.5" y2="988" stroke="#9a9a9a" stroke-width="1"/>
<line x1="138.5" y1="999" x2="138.5" y2="1002" stroke="#9a9a9a" stroke-width="1"/>
<line x1="155.5" y1="977" x2="155.5" y2="988" stroke="#9a9a9a" stroke-width="1"/>
<line x1="171.5" y1="977" x2="171.5" y2="988" stroke="#9a9a9a" stroke-width="1"/>
<line x1="187.5" y1="977" x2="187.5" y2="988" stroke="#9a9a9a" stroke-width="1"/>
<line x1="203.5" y1="977" x2="203.5" y2="988" stroke="#9a9a9a" stroke-width="1"/>
<line x1="219.5" y1="977" x2="219.5" y2="988" stroke="#9a9a9a" stroke-width="1"/>
<line x1="219.5" y1="999" x2="219.5" y2="1002" stroke="#9a9a9a" stroke-width="1"/>
<line x1="236.5" y1="977" x2="236.5" y2="988" stroke="#9a9a9a" stroke-width="1"/>
<line x1="252.5" y1="977" x2="252.5" y2="988" stroke="#9a9a9a" stroke-width="1"/>
<line x1="268.5" y1="977" x2="268.5" y2="988" stroke="#9a9a9a" stroke-width="1"/>
<line x1="284.5" y1="977" x2="284.5" y2="988" stroke="#9a9a9a" stroke-width="1"/>
<line x1="300.5" y1="977" x2="300.5" y2="988" stroke="#9a9a9a" stroke-width="1"/>
<line x1="300.5" y1="999" x2="300.5" y2="1002" stroke="#9a9a9a" stroke-width="1"/>
<line x1="317.5" y1="977" x2="317.5" y2="988" stroke="#9a9a9a" stroke-width="1"/>
<line x1="333.5" y1="977" x2="333.5" y2="988" stroke="#9a9a9a" stroke-width="1"/>
<line x1="349.5" y1="977" x2="349.5" y2="988" stroke="#9a9a9a" stroke-width="1"/>
<line x1="365.5" y1="977" x2="365.5" y2="988" stroke="#9a9a9a" stroke-width="1"/>
<line x1="382.5" y1="977" x2="382.5" y2="988" stroke="#9a9a9a" stroke-width="1"/>
<line x1="382.5" y1="999" x2="382.5" y2="1002" stroke="#9a9a9a" stroke-width="1"/>
<line x1="398.5" y1="977" x2="398.5" y2="988" stroke="#9a9a9a" stroke-width="1"/>
<line x1="414.5" y1="977" x2="414.5" y2="988" stroke="#9a9a9a" stroke-width="1"/>
<line x1="430.5" y1="977" x2="430.5" y2="988" stroke="#9a9a9a" stroke-width="1"/>
<line x1="446.5" y1="977" x2="446.5" y2="988" stroke="#9a9a9a" stroke-width="1"/>
<line x1="463.5" y1="977" x2="463.5" y2="988" stroke="#9a9a9a" stroke-width="1"/>
<line x1="463.5" y1="999" x2="463.5" y2="1002" stroke="#9a9a9a" stroke-width="1"/>
<line x1="479.5" y1="977" x2="479.5" y2="988" stroke="#9a9a9a" stroke-width="1"/>
<line x1="495.5" y1="977" x2="495.5" y2="988" stroke="#9a9a9a" stroke-width="1"/>
<line x1="511.5" y1="977" x2="511.5" y2="988" stroke="#9a9a9a" stroke-width="1"/>
<line x1="528.5" y1="977" x2="528.5" y2="988" stroke="#9a9a9a" stroke-width="1"/>
<line x1="544.5" y1="977" x2="544.5" y2="988" stroke="#9a9a9a" stroke-width="1"/>
<line x1="544.5" y1="999" x2="544.5" y2="1002" stroke="#9a9a9a" stroke-width="1"/>
<line x1="560.5" y1="977" x2="560.5" y2="988" stroke="#9a9a9a" stroke-width="1"/>
<line x1="576.5" y1="977" x2="576.5" y2="988" stroke="#9a9a9a" stroke-width="1"/>
<line x1="592.5" y1="977" x2="592.5" y2="988" stroke="#9a9a9a" stroke-width="1"/>
<line x1="609.5" y1="977" x2="609.5" y2="988" stroke="#9a9a9a" stroke-width="1"/>
<line x1="625.5" y1="977" x2="625.5" y2="988" stroke="#9a9a9a" stroke-width="1"/>
<line x1="625.5" y1="999" x2="625.5" y2="1002" stroke="#9a9a9a" stroke-width="1"/>
<line x1="641.5" y1="977" x2="641.5" y2="988" stroke="#9a9a9a" stroke-width="1"/>
<line x1="657.5" y1="977" x2="657.5" y2="988" stroke="#9a9a9a" stroke-width="1"/>
<line x1="674.5" y1="977" x2="674.5" y2="988" stroke="#9a9a9a" stroke-width="1"/>
<line x1="690.5" y1="977" x2="690.5" y2="988" stroke="#9a9a9a" stroke-width="1"/>
<line x1="706.5" y1="977" x2="706.5" y2="988" stroke="#9a9a9a" stroke-width="1"/>
<line x1="706.5" y1="999" x2="706.5" y2="1002" stroke="#9a9a9a" stroke-width="1"/>
<line x1="722.5" y1="977" x2="722.5" y2="988" stroke="#9a9a9a" stroke-width="1"/>
<line x1="738.5" y1="977" x2="738.5" y2="988" stroke="#9a9a9a" stroke-width="1"/>
<line x1="755.5" y1="977" x2="755.5" y2="988" stroke="#9a9a9a" stroke-width="1"/>
<line x1="771.5" y1="977" x2="771.5" y2="988" stroke="#9a9a9a" stroke-width="1"/>
<line x1="787.5" y1="977" x2="787.5" y2="988" stroke="#9a9a9a" stroke-width="1"/>
<line x1="787.5" y1="999" x2="787.5" y2="1002" stroke="#9a9a9a" stroke-width="1"/>
<line x1="803.5" y1="977" x2="803.5" y2="988" stroke="#9a9a9a" stroke-width="1"/>
<line x1="820.5" y1="977" x2="820.5" y2="988" stroke="#9a9a9a" stroke-width="1"/>
<line x1="836.5" y1="977" x2="836.5" y2="988" stroke="#9a9a9a" stroke-width="1"/>
<line x1="852.5" y1="977" x2="852.5" y2="988" stroke="#9a9a9a" stroke-width="1"/>
<line x1="868.5" y1="977" x2="868.5" y2="988" stroke="#9a9a9a" stroke-width="1"/>
<line x1="868.5" y1="999" x2="868.5" y2="1002" stroke="#9a9a9a" stroke-width="1"/>
<line x1="884.5" y1="977" x2="884.5" y2="988" stroke="#9a9a9a" stroke-width="1"/>
<line x1="901.5" y1="977" x2="901.5" y2="988" stroke="#9a9a9a" stroke-width="1"/>
<line x1="917.5" y1="977" x2="917.5" y2="988" stroke="#9a9a9a" stroke-width="1"/>
<line x1="933.5" y1="977" x2="933.5" y2="988" stroke="#9a9a9a" stroke-width="1"/>
<line x1="949.5" y1="977" x2="949.5" y2="988" stroke="#9a9a9a" stroke-width="1"/>
<line x1="949.5" y1="999" x2="949.5" y2="1002" stroke="#9a9a9a" stroke-width="1"/>
<line x1="966.5" y1="977" x2="966.5" y2="988" stroke="#9a9a9a" stroke-width="1"/>
<line x1="982.5" y1="977" x2="982.5" y2="988" stroke="#9a9a9a" stroke-width="1"/>
<line x1="998.5" y1="977" x2="998.5" y2="988" stroke="#9a9a9a" stroke-width="1"/>
<line x1="1014.5" y1="977" x2="1014.5" y2="988" stroke="#9a9a9a" stroke-width="1"/>
<line x1="1030.5" y1="977" x2="1030.5" y2="988" stroke="#9a9a9a" stroke-width="1"/>
<line x1="1030.5" y1="999" x2="1030.5" y2="1002" stroke="#9a9a9a" stroke-width="1"/>
<line x1="1047.5" y1="977" x2="1047.5" y2="988" stroke="#9a9a9a" stroke-width="1"/>
<line x1="1063.5" y1="977" x2="1063.5" y2="988" stroke="#9a9a9a" stroke-width="1"/>
<line x1="1079.5" y1="977" x2="1079.5" y2="988" stroke="#9a9a9a" stroke-width="1"/>
<line x1="1095.5" y1="977" x2="1095.5" y2="988" stroke="#9a9a9a" stroke-width="1"/>
<line x1="1112.5" y1="977" x2="1112.5" y2="988" stroke="#9a9a9a" stroke-width="1"/>
<line x1="1112.5" y1="999" x2="1112.5" y2="1002" stroke="#9a9a9a" stroke-width="1"/>
<line x1="1128.5" y1="977" x2="1128.5" y2="988" stroke="#9a9a9a" stroke-width="1"/>
<line x1="1144.5" y1="977" x2="1144.5" y2="988" stroke="#9a9a9a" stroke-width="1"/>
<line x1="1160.5" y1="977" x2="1160.5" y2="988" stroke="#9a9a9a" stroke-width="1"/>
<line x1="1176.5" y1="977" x2="1176.5" y2="988" stroke="#9a9a9a" stroke-width="1"/>
<line x1="1193.5" y1="977" x2="1193.5" y2="988" stroke="#9a9a9a" stroke-width="1"/>
<line x1="1193.5" y1="999" x2="1193.5" y2="1002" stroke="#9a9a9a" stroke-width="1"/>
<line x1="1209.5" y1="977" x2="1209.5" y2="988" stroke="#9a9a9a" stroke-width="1"/>
<line x1="1225.5" y1="977" x2="1225.5" y2="988" stroke="#9a9a9a" stroke-width="1"/>
<line x1="1241.5" y1="977" x2="1241.5" y2="988" stroke="#9a9a9a" stroke-width="1"/>
<line x1="1257.5" y1="977" x2="1257.5" y2="988" stroke="#9a9a9a" stroke-width="1"/>
<line x1="1274.5" y1="977" x2="1274.5" y2="988" stroke="#9a9a9a" stroke-width="1"/>
<line x1="1274.5" y1="999" x2="1274.5" y2="1002" stroke="#9a9a9a" stroke-width="1"/>
<line x1="1290.5" y1="977" x2="1290.5" y2="988" stroke="#9a9a9a" stroke-width="1"/>
<line x1="1306.5" y1="977" x2="1306.5" y2="988" stroke="#9a9a9a" stroke-width="1"/>
<line x1="1322.5" y1="977" x2="1322.5" y2="988" stroke="#9a9a9a" stroke-width="1"/>
<line x1="1339.5" y1="977" x2="1339.5" y2="988" stroke="#9a9a9a" stroke-width="1"/>
<line x1="1355.5" y1="977" x2="1355.5" y2="988" stroke="#9a9a9a" stroke-width="1"/>
<line x1="1355.5" y1="999" x2="1355.5" y2="1002" stroke="#9a9a9a" stroke-width="1"/>
<line x1="1371.5" y1="977" x2="1371.5" y2="988" stroke="#9a9a9a" stroke-width="1"/>
<line x1="1387.5" y1="977" x2="1387.5" y2="988" stroke="#9a9a9a" stroke-width="1"/>
<line x1="1403.5" y1="977" x2="1403.5" y2="988" stroke="#9a9a9a" stroke-width="1"/>
<line x1="1420.5" y1="977" x2="1420.5" y2="988" stroke="#9a9a9a" stroke-width="1"/>
<line x1="1436.5" y1="977" x2="1436.5" y2="988" stroke="#9a9a9a" stroke-width="1"/>
<line x1="1436.5" y1="999" x2="1436.5" y2="1002" stroke="#9a9a9a" stroke-width="1"/>
<line x1="1452.5" y1="977" x2="1452.5" y2="988" stroke="#9a9a9a" stroke-width="1"/>
<line x1="1468.5" y1="977" x2="1468.5" y2="988" stroke="#9a9a9a" stroke-width="1"/>
<line x1="1485.5" y1="977" x2="1485.5" y2="988" stroke="#9a9a9a" stroke-width="1"/>
<line x1="1501.5" y1="977" x2="1501.5" y2="988" stroke="#9a9a9a" stroke-width="1"/>
<line x1="1517.5" y1="977" x2="1517.5" y2="988" stroke="#9a9a9a" stroke-width="1"/>
<line x1="1517.5" y1="999" x2="1517.5" y2="1002" stroke="#9a9a9a" stroke-width="1"/>
<line x1="1533.5" y1="977" x2="1533.5" y2="988" stroke="#9a9a9a" stroke-width="1"/>
<line x1="1549.5" y1="977" x2="1549.5" y2="988" stroke="#9a9a9a" stroke-width="1"/>
<line x1="1566.5" y1="977" x2="1566.5" y2="988" stroke="#9a9a9a" stroke-width="1"/>
<line x1="1582.5" y1="977" x2="1582.5" y2="988" stroke="#9a9a9a" stroke-width="1"/>
<line x1="1598.5" y1="977" x2="1598.5" y2="988" stroke="#9a9a9a" stroke-width="1"/>
<line x1="1598.5" y1="999" x2="1598.5" y2="1002" stroke="#9a9a9a" stroke-width="1"/>
<line x1="1614.5" y1="977" x2="1614.5" y2="988" stroke="#9a9a9a" stroke-width="1"/>
<line x1="1631.5" y1="977" x2="1631.5" y2="988" stroke="#9a9a9a" stroke-width="1"/>
<line x1="1647.5" y1="977" x2="1647.5" y2="988" stroke="#9a9a9a" stroke-width="1"/>
<line x1="1663.5" y1="977" x2="1663.5" y2="988" stroke="#9a9a9a" stroke-width="1"/>
<line x1="1679.5" y1="977" x2="1679.5" y2="988" stroke="#9a9a9a" stroke-width="1"/>
<line x1="1679.5" y1="999" x2="1679.5" y2="1002" stroke="#9a9a9a" stroke-width="1"/>
<text x="57.2" y="999" font-family="Liberation Sans" font-size="11" fill="#e0d890" text-anchor="middle" font-weight="normal" font-style="normal">0</text>
<text x="138.3" y="999" font-family="Liberation Sans" font-size="11" fill="#dcdcdc" text-anchor="middle" font-weight="normal" font-style="normal">5</text>
<text x="219.39999999999998" y="999" font-family="Liberation Sans" font-size="11" fill="#dcdcdc" text-anchor="middle" font-weight="normal" font-style="normal">10</text>
<text x="300.5" y="999" font-family="Liberation Sans" font-size="11" fill="#dcdcdc" text-anchor="middle" font-weight="normal" font-style="normal">15</text>
<text x="381.59999999999997" y="999" font-family="Liberation Sans" font-size="11" fill="#dcdcdc" text-anchor="middle" font-weight="normal" font-style="normal">20</text>
<text x="462.7" y="999" font-family="Liberation Sans" font-size="11" fill="#dcdcdc" text-anchor="middle" font-weight="normal" font-style="normal">25</text>
<text x="543.8" y="999" font-family="Liberation Sans" font-size="11" fill="#dcdcdc" text-anchor="middle" font-weight="normal" font-style="normal">30</text>
<text x="624.9" y="999" font-family="Liberation Sans" font-size="11" fill="#dcdcdc" text-anchor="middle" font-weight="normal" font-style="normal">35</text>
<text x="706.0" y="999" font-family="Liberation Sans" font-size="11" fill="#dcdcdc" text-anchor="middle" font-weight="normal" font-style="normal">40</text>
<text x="787.1" y="999" font-family="Liberation Sans" font-size="11" fill="#dcdcdc" text-anchor="middle" font-weight="normal" font-style="normal">45</text>
<text x="868.2" y="999" font-family="Liberation Sans" font-size="11" fill="#dcdcdc" text-anchor="middle" font-weight="normal" font-style="normal">50</text>
<text x="949.3" y="999" font-family="Liberation Sans" font-size="11" fill="#dcdcdc" text-anchor="middle" font-weight="normal" font-style="normal">55</text>
<text x="1030.3999999999999" y="999" font-family="Liberation Sans" font-size="11" fill="#dcdcdc" text-anchor="middle" font-weight="normal" font-style="normal">60</text>
<text x="1111.5" y="999" font-family="Liberation Sans" font-size="11" fill="#dcdcdc" text-anchor="middle" font-weight="normal" font-style="normal">65</text>
<text x="1192.6" y="999" font-family="Liberation Sans" font-size="11" fill="#dcdcdc" text-anchor="middle" font-weight="normal" font-style="normal">70</text>
<text x="1273.7" y="999" font-family="Liberation Sans" font-size="11" fill="#dcdcdc" text-anchor="middle" font-weight="normal" font-style="normal">75</text>
<text x="1354.8" y="999" font-family="Liberation Sans" font-size="11" fill="#dcdcdc" text-anchor="middle" font-weight="normal" font-style="normal">80</text>
<text x="1435.8999999999999" y="999" font-family="Liberation Sans" font-size="11" fill="#dcdcdc" text-anchor="middle" font-weight="normal" font-style="normal">85</text>
<text x="1517.0" y="999" font-family="Liberation Sans" font-size="11" fill="#dcdcdc" text-anchor="middle" font-weight="normal" font-style="normal">90</text>
<text x="1598.1" y="999" font-family="Liberation Sans" font-size="11" fill="#dcdcdc" text-anchor="middle" font-weight="normal" font-style="normal">95</text>
<text x="1679.2" y="999" font-family="Liberation Sans" font-size="11" fill="#dcdcdc" text-anchor="middle" font-weight="normal" font-style="normal">100</text>
<rect x="0" y="1002" width="1920" height="51" fill="#454545"/>
<line x1="1737" y1="1001.5" x2="1919" y2="1001.5" stroke="#0e0e0e" stroke-width="1.2"/>
<rect x="1" y="1004" width="98" height="23" fill="#b0b0b0"/>
<rect x="2" y="1005" width="96" height="21" fill="#dcc8c8"/>
<line x1="98.5" y1="1005" x2="98.5" y2="1027" stroke="#fff" stroke-width="1.5"/>
<rect x="1" y="1027" width="98" height="24" fill="#a8a8a8"/>
<rect x="2" y="1028" width="96" height="22" fill="#fefefe"/>
<line x1="2" y1="1028.5" x2="98" y2="1028.5" stroke="#222" stroke-width="1.5"/>
<text x="6" y="1044" font-family="Liberation Mono" font-size="12" fill="#888" text-anchor="start" font-weight="normal" font-style="normal" textLength="87" lengthAdjust="spacingAndGlyphs">MAXScript Mi</text>
<line x1="104.5" y1="1003" x2="104.5" y2="1053" stroke="#202020" stroke-width="1.5"/>
<line x1="102.5" y1="1003" x2="102.5" y2="1053" stroke="#505050" stroke-width="1"/>
<rect x="106.5" y="1006" width="969" height="21" fill="#424242"/>
<path d="M107,1027 V1006.5 H1075" fill="none" stroke="#1a1a1a" stroke-width="1.5"/>
<path d="M107,1026.5 H1074.5 V1006" fill="none" stroke="#555" stroke-width="1"/>
<text x="112" y="1021" font-family="Liberation Sans" font-size="11" fill="#e6e6dc" text-anchor="start" font-weight="normal" font-style="normal" textLength="70" lengthAdjust="spacingAndGlyphs">None Selected</text>
<rect x="106.5" y="1031" width="1246" height="22" fill="#424242"/>
<path d="M107,1053 V1031.5 H1352" fill="none" stroke="#1a1a1a" stroke-width="1.5"/>
<text x="112" y="1046" font-family="Liberation Sans" font-size="11" fill="#e6e6dc" text-anchor="start" font-weight="normal" font-style="normal" textLength="195" lengthAdjust="spacingAndGlyphs">Click and drag to pan a non-camera view</text>
<rect x="1082.5" y="1015.5" width="10" height="8" fill="none" stroke="#c0c0c0" stroke-width="1.2"/>
<path d="M1084.5,1015 V1012 C1084.5,1008 1090.5,1008 1090.5,1012 V1015" fill="none" stroke="#c0c0c0" stroke-width="1.2"/>
<line x1="1087.5" y1="1018" x2="1087.5" y2="1021" stroke="#c0c0c0" stroke-width="1"/>
<rect x="1107.5" y="1008.5" width="15" height="15" fill="#444" stroke="#f0f0f0" stroke-width="1.3"/>
<circle cx="1115" cy="1016" r="3.5" fill="none" stroke="#f0f0f0" stroke-width="1.2"/>
<path d="M1115,1009 V1012.5 M1115,1019.5 V1023 M1108,1016 H1111.5 M1118.5,1016 H1122" fill="none" stroke="#f0f0f0" stroke-width="1.2"/>
<text x="1130" y="1021" font-family="Liberation Sans" font-size="11" fill="#dcdcdc" text-anchor="start" font-weight="normal" font-style="normal" textLength="10" lengthAdjust="spacingAndGlyphs">X:</text>
<rect x="1142" y="1006.5" width="57" height="20" fill="#0c0c0c"/>
<rect x="1144" y="1008.5" width="55" height="17.5" fill="#555555"/>
<text x="1145" y="1021" font-family="Liberation Sans" font-size="11" fill="#0a0a0a" text-anchor="start" font-weight="normal" font-style="normal" textLength="36" lengthAdjust="spacingAndGlyphs">-10,712</text>
<text x="1212" y="1021" font-family="Liberation Sans" font-size="11" fill="#dcdcdc" text-anchor="start" font-weight="normal" font-style="normal" textLength="10" lengthAdjust="spacingAndGlyphs">Y:</text>
<rect x="1223.5" y="1006.5" width="57" height="20" fill="#0c0c0c"/>
<rect x="1225.5" y="1008.5" width="55" height="17.5" fill="#555555"/>
<text x="1226.5" y="1021" font-family="Liberation Sans" font-size="11" fill="#0a0a0a" text-anchor="start" font-weight="normal" font-style="normal" textLength="36" lengthAdjust="spacingAndGlyphs">-23,981</text>
<text x="1294" y="1021" font-family="Liberation Sans" font-size="11" fill="#dcdcdc" text-anchor="start" font-weight="normal" font-style="normal" textLength="10" lengthAdjust="spacingAndGlyphs">Z:</text>
<rect x="1305" y="1006.5" width="57" height="20" fill="#0c0c0c"/>
<rect x="1307" y="1008.5" width="55" height="17.5" fill="#555555"/>
<text x="1308" y="1021" font-family="Liberation Sans" font-size="11" fill="#0a0a0a" text-anchor="start" font-weight="normal" font-style="normal" textLength="16" lengthAdjust="spacingAndGlyphs">0,0</text>
<rect x="1377" y="1006" width="100" height="21" fill="#424242"/>
<path d="M1377.5,1027 V1006.5 H1477" fill="none" stroke="#1a1a1a" stroke-width="1"/>
<text x="1382" y="1021" font-family="Liberation Sans" font-size="11" fill="#e6e6dc" text-anchor="start" font-weight="normal" font-style="normal" textLength="55" lengthAdjust="spacingAndGlyphs">Grid = 10,0</text>
<rect x="1353" y="1031" width="21" height="22" fill="#5a5a5a"/>
<path d="M1358,1038 L1361,1035 H1370 V1046 L1367,1049 H1358 Z M1358,1038 H1367 V1049 M1367,1038 L1370,1035" fill="none" stroke="#f0f0f0" stroke-width="1.2"/>
<rect x="1377" y="1032" width="100" height="21" fill="#424242"/>
<path d="M1377.5,1053 V1032.5 H1477" fill="none" stroke="#1a1a1a" stroke-width="1"/>
<text x="1383" y="1047" font-family="Liberation Sans" font-size="11" fill="#e6e6dc" text-anchor="start" font-weight="normal" font-style="normal" textLength="64" lengthAdjust="spacingAndGlyphs">Add Time Tag</text>
<rect x="1480.5" y="1005.5" width="43" height="43" fill="#474747" stroke="#2a2a2a" stroke-width="1"/>
<circle cx="1494" cy="1026" r="3.5" fill="none" stroke="#111" stroke-width="2"/>
<path d="M1497.5,1026 H1512 M1506,1026 V1029 M1510,1026 V1029" fill="none" stroke="#111" stroke-width="2"/>
<rect x="1527.5" y="1005.5" width="47" height="21" fill="#474747" stroke="#2a2a2a" stroke-width="1"/>
<text x="1551" y="1021" font-family="Liberation Sans" font-size="11" fill="#e6e6dc" text-anchor="middle" font-weight="normal" font-style="normal" textLength="44" lengthAdjust="spacingAndGlyphs">Auto Key</text>
<rect x="1527.5" y="1027.5" width="47" height="21" fill="#474747" stroke="#2a2a2a" stroke-width="1"/>
<text x="1551" y="1043" font-family="Liberation Sans" font-size="11" fill="#e6e6dc" text-anchor="middle" font-weight="normal" font-style="normal" textLength="37" lengthAdjust="spacingAndGlyphs">Set Key</text>
<rect x="1578" y="1006" width="115" height="20" fill="#0c0c0c"/>
<rect x="1580" y="1008" width="112" height="17" fill="#585858"/>
<rect x="1676" y="1008" width="15" height="16" fill="#dcd8d0"/>
<path d="M1679.5,1014 H1687.5 L1683.5,1018 Z" fill="#000"/>
<text x="1581" y="1020.5" font-family="Liberation Sans" font-size="11" fill="#ececec" text-anchor="start" font-weight="normal" font-style="normal" textLength="42" lengthAdjust="spacingAndGlyphs">Selected</text>
<path d="M1583,1046 C1586,1046 1587,1044 1588,1038 C1589,1032 1591,1031 1593,1031 C1595,1031 1597,1033 1598,1035" fill="none" stroke="#bbb" stroke-width="1.2"/>
<line x1="1597" y1="1048" x2="1600" y2="1045" stroke="#f0f0f0" stroke-width="1.5"/>
<rect x="1605.5" y="1028.5" width="88" height="20" fill="#474747" stroke="#2a2a2a" stroke-width="1"/>
<text x="1649" y="1043" font-family="Liberation Sans" font-size="11" fill="#e6e6dc" text-anchor="middle" font-weight="normal" font-style="normal" textLength="62" lengthAdjust="spacingAndGlyphs">Key Filters...</text>
<path d="M1703,1010 V1022 M1704,1016 L1710,1010 V1022 Z M1710,1016 L1716,1010 V1022 Z M1717,1010 V1022" fill="#f0f0f0" stroke="#f0f0f0" stroke-width="1.2"/>
<line x1="1723.5" y1="1009" x2="1723.5" y2="1024" stroke="#1a1a1a" stroke-width="1.5"/>
<path d="M1729,1016 L1735,1010 V1022 Z" fill="#eee"/>
<rect x="1736" y="1011" width="2" height="10" fill="#eee"/>
<rect x="1739" y="1011" width="2" height="10" fill="#eee"/>
<rect x="1742" y="1011" width="2" height="10" fill="#eee"/>
<path d="M1753,1010 L1763,1016 L1753,1022 Z" fill="#f0f0f0"/>
<line x1="1763" y1="1025" x2="1766" y2="1022" stroke="#f0f0f0" stroke-width="1.5"/>
<rect x="1774" y="1011" width="2" height="10" fill="#eee"/>
<rect x="1777" y="1011" width="2" height="10" fill="#eee"/>
<rect x="1780" y="1011" width="2" height="10" fill="#eee"/>
<path d="M1782,1010 L1788,1016 L1782,1022 Z" fill="#eee"/>
<line x1="1796.5" y1="1009" x2="1796.5" y2="1024" stroke="#1a1a1a" stroke-width="1.5"/>
<path d="M1801,1010 V1022 M1802,1010 L1808,1016 L1802,1022 Z M1808,1010 L1814,1016 L1808,1022 Z M1815,1010 V1022" fill="#f0f0f0" stroke="#f0f0f0" stroke-width="1.2"/>
<line x1="1824.5" y1="1009" x2="1824.5" y2="1024" stroke="#1a1a1a" stroke-width="1.5"/>
<path d="M1703,1033 V1045 M1717,1033 V1045 M1704,1039 L1709,1034 V1044 Z M1716,1039 L1711,1034 V1044 Z" fill="#eee" stroke="#eee" stroke-width="1.2"/>
<line x1="1723.5" y1="1031" x2="1723.5" y2="1047" stroke="#1a1a1a" stroke-width="1.5"/>
<rect x="1726" y="1029" width="61" height="19" fill="#0c0c0c"/>
<rect x="1728" y="1031" width="59" height="17" fill="#555555"/>
<text x="1730" y="1043" font-family="Liberation Sans" font-size="11" fill="#ececec" text-anchor="start" font-weight="normal" font-style="normal">0</text>
<rect x="1789" y="1030" width="11" height="17" fill="#474747"/>
<path d="M1791.5,1036 L1794.5,1032.5 L1797.5,1036 Z M1791.5,1041 L1794.5,1044.5 L1797.5,1041 Z" fill="#aaa"/>
<line x1="1803.5" y1="1031" x2="1803.5" y2="1047" stroke="#1a1a1a" stroke-width="1.5"/>
<rect x="1807.5" y="1032.5" width="12" height="12" fill="#555" stroke="#ddd" stroke-width="1.1"/>
<circle cx="1819" cy="1044" r="3.5" fill="#444" stroke="#ddd" stroke-width="1"/>
<circle cx="1833" cy="1014" r="4.5" fill="none" stroke="#eee" stroke-width="1.4"/>
<line x1="1836" y1="1017" x2="1841" y2="1022" stroke="#eee" stroke-width="2"/>
<path d="M1840,1008 H1845 M1842.5,1005.5 V1010.5" fill="none" stroke="#eee" stroke-width="1"/>
<rect x="1853.5" y="1008.5" width="12" height="12" fill="none" stroke="#eee" stroke-width="1.2"/>
<line x1="1859.5" y1="1008.5" x2="1859.5" y2="1020.5" stroke="#eee" stroke-width="1"/>
<line x1="1853.5" y1="1014.5" x2="1865.5" y2="1014.5" stroke="#eee" stroke-width="1"/>
<circle cx="1862" cy="1018" r="3" fill="#444" stroke="#eee" stroke-width="1.2"/>
<path d="M1877,1013 V1009 H1881 M1885,1009 H1889 V1013 M1889,1017 V1021 H1885 M1881,1021 H1877 V1017" fill="none" stroke="#eee" stroke-width="1.3"/>
<rect x="1880.5" y="1012.5" width="6" height="6" fill="#555" stroke="#eee" stroke-width="1"/>
<line x1="1890" y1="1025" x2="1893" y2="1022" stroke="#f0f0f0" stroke-width="1.5"/>
<rect x="1900.5" y="1008.5" width="7" height="7" fill="none" stroke="#eee" stroke-width="1.2"/>
<rect x="1907.5" y="1008.5" width="7" height="7" fill="none" stroke="#eee" stroke-width="1.2"/>
<rect x="1900.5" y="1015.5" width="7" height="7" fill="#666" stroke="#eee" stroke-width="1.2"/>
<line x1="1914" y1="1025" x2="1917" y2="1022" stroke="#f0f0f0" stroke-width="1.5"/>
<path d="M1830,1031.5 L1849,1039 L1830,1046.5" fill="none" stroke="#eee" stroke-width="1.1"/>
<line x1="1843" y1="1048" x2="1846" y2="1045" stroke="#f0f0f0" stroke-width="1.5"/>
<rect x="1850" y="1029" width="21" height="21" fill="#1f2d3b"/>
<path d="M1854,1040 V1035 C1854,1033 1857,1033 1857,1035 V1032 C1857,1030 1860,1030 1860,1032 V1034 C1860,1032 1863,1032 1863,1034 V1036 C1863,1034 1866,1034 1866,1036 V1042 C1866,1046 1863,1048 1860,1048 C1856,1048 1853,1045 1851,1041 Z" fill="#4a3a2a" stroke="#eee" stroke-width="1"/>
<ellipse cx="1882" cy="1041" rx="8" ry="3.5" fill="none" stroke="#eee" stroke-width="1.1"/>
<path d="M1882,1032 V1046 M1879,1035 L1882,1031 L1885,1035" fill="none" stroke="#eee" stroke-width="1.2"/>
<line x1="1890" y1="1048" x2="1893" y2="1045" stroke="#f0f0f0" stroke-width="1.5"/>
<rect x="1897.5" y="1031.5" width="11" height="11" fill="none" stroke="#eee" stroke-width="1.2"/>
<rect x="1905.5" y="1039.5" width="7" height="7" fill="none" stroke="#eee" stroke-width="1.2"/>
<path d="M1900,1034 L1906,1040 M1900,1034 H1904 M1900,1034 V1038" fill="none" stroke="#eee" stroke-width="1.2"/>
<line x1="0" y1="1052.5" x2="1920" y2="1052.5" stroke="#c8c8c8" stroke-width="1"/>
</svg>
</body></html>
